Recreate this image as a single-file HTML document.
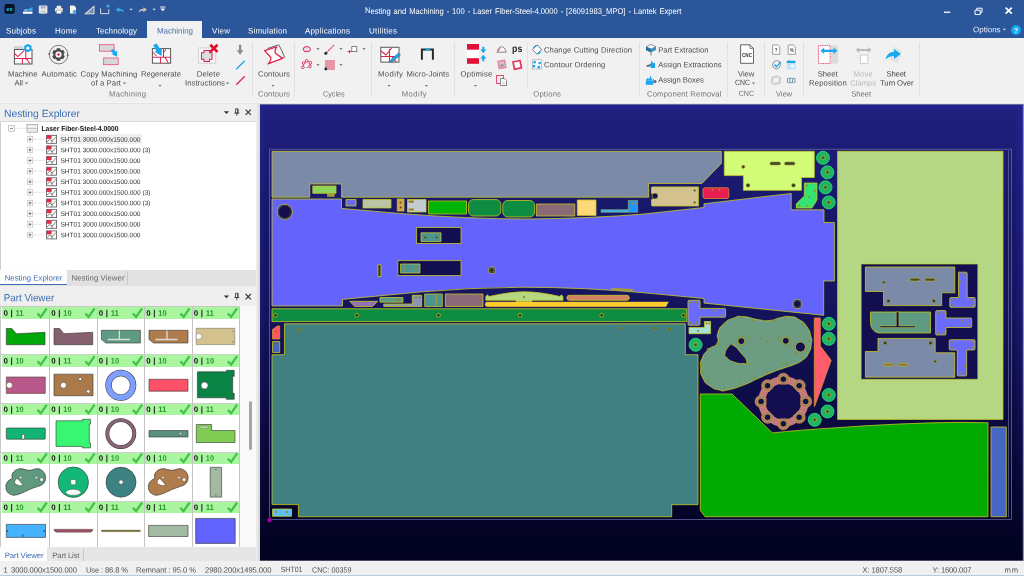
<!DOCTYPE html>
<html lang="en"><head><meta charset="utf-8"><title>Nesting and Machining - Lantek Expert</title>
<style>
html,body{margin:0;padding:0;}
body{width:1024px;height:576px;overflow:hidden;position:relative;background:#f0f0f0;font-family:"Liberation Sans",sans-serif;}
.t{position:absolute;left:0;top:0;white-space:pre;display:block;transform-origin:0 0;}
#root{position:absolute;left:0;top:0;width:1024px;height:576px;will-change:transform;}
.b{position:absolute;}
svg{position:absolute;overflow:visible;}
</style></head>
<body>
<div id="root">
<div class="b" style="left:0px;top:0px;width:1024px;height:38px;background:#2b579a;"></div>
<div class="b" style="left:147px;top:21px;width:55px;height:17px;background:#f1f1f1;"></div>
<span class="t" style="transform:translate(365.00px,5.50px) rotate(0.03deg) scaleX(0.913);font-size:8.3px;line-height:10px;color:#fff;letter-spacing:0.000px;word-spacing:0.9px;">Nesting and Machining - 100 - Laser Fiber-Steel-4.0000 - [26091983_MPO] - Lantek Expert</span>
<span class="t" style="transform:translate(6.00px,26.60px) rotate(0.03deg);font-size:8.0px;line-height:9px;color:#fff;letter-spacing:0.181px;">Subjobs</span>
<span class="t" style="transform:translate(55.00px,26.60px) rotate(0.03deg);font-size:8.0px;line-height:9px;color:#fff;letter-spacing:0.220px;">Home</span>
<span class="t" style="transform:translate(96.00px,26.60px) rotate(0.03deg);font-size:8.0px;line-height:9px;color:#fff;letter-spacing:0.058px;">Technology</span>
<span class="t" style="transform:translate(212.00px,26.60px) rotate(0.03deg);font-size:8.0px;line-height:9px;color:#fff;letter-spacing:0.268px;">View</span>
<span class="t" style="transform:translate(248.00px,26.60px) rotate(0.03deg);font-size:8.0px;line-height:9px;color:#fff;letter-spacing:0.183px;">Simulation</span>
<span class="t" style="transform:translate(305.00px,26.60px) rotate(0.03deg);font-size:8.0px;line-height:9px;color:#fff;letter-spacing:0.169px;">Applications</span>
<span class="t" style="transform:translate(369.00px,26.60px) rotate(0.03deg);font-size:8.0px;line-height:9px;color:#fff;letter-spacing:0.277px;">Utilities</span>
<span class="t" style="transform:translate(157.00px,26.60px) rotate(0.03deg);font-size:8.0px;line-height:9px;color:#4a6ea8;letter-spacing:-0.058px;">Machining</span>
<span class="t" style="transform:translate(973.00px,25.30px) rotate(0.03deg);font-size:8.0px;line-height:9px;color:#e8eef8;letter-spacing:0.005px;">Options</span>
<svg style="left:0;top:0" width="1024" height="38" viewBox="0 0 1024 38">
<rect x="4.5" y="4" width="10.2" height="9.8" rx="2" fill="#07131f"/>
<text x="9.6" y="10.800" font-size="6" font-weight="bold" fill="#1cc0f4" text-anchor="middle" font-family="Liberation Sans, sans-serif">ex</text>
<path d="M23 13.8h9.5v-2.2h-9.5z" fill="#fff"/><path d="M24 10.8l3-1.2 5.5-2.6v3.8z" fill="#39a9e8"/><path d="M23.5 11l2.5-2 1 1z" fill="#fff"/>
<rect x="38.8" y="5.6" width="8.6" height="8" rx="0.8" fill="#e9e6df"/><rect x="40.6" y="5.6" width="5" height="3" fill="#9fb4d3"/><rect x="40.8" y="10.4" width="4.6" height="3.2" fill="#c8cfdd"/>
<rect x="56.6" y="5.8" width="4.6" height="2.6" fill="#f2efe8"/><rect x="55" y="8" width="7.8" height="3.8" rx="0.8" fill="#e6e2da"/><rect x="56.6" y="10.6" width="4.6" height="3" fill="#fff" stroke="#8a93a8" stroke-width="0.4"/>
<path d="M70 5.5h4l2 2v6h-6z" fill="#f4f2ee"/><circle cx="74.6" cy="11.8" r="1.8" fill="#39a9e8"/>
<path d="M85.5 13.8h8.4v-7.4z" fill="none" stroke="#e9e6df" stroke-width="1.1"/><path d="M88.6 12.4h3.6v-3z" fill="none" stroke="#e9e6df" stroke-width="0.6"/>
<path d="M100.6 8.4v5.2h8.2v-4.4" fill="none" stroke="#e9e6df" stroke-width="0.9"/><circle cx="108" cy="6" r="1.6" fill="#39a9e8"/><path d="M101 13.6h8" stroke="#bcd" stroke-width="0.5"/>
<path d="M115.6 9.6l3.6-2.4v1.6c2.6 0 4.4 1.2 4.8 3.8c-1.2-1.4-2.6-1.8-4.8-1.8v1.400z" fill="#39a9e8"/>
<path d="M129.400 8.800h3.400l-1.700 1.800z" fill="#d5dded"/>
<path d="M147 9.600l-3.600-2.400v1.600c-2.600 0-4.400 1.200-4.800 3.800c1.200-1.400 2.600-1.800 4.800-1.800v1.400z" fill="#c9c3b4"/>
<path d="M152.400 8.800h3.400l-1.700 1.800z" fill="#d5dded"/>
<path d="M160.200 6.600h5.200v1h-5.200z M160.200 8.400h5.200l-2.600 2.800z" fill="#f2f4f8"/>
<path d="M944 11.600h6.200v1.300h-6.200z" fill="#fff"/>
<path d="M975 10.200h5.200v4.300h-5.200z M976.800 10v-1.800h5.200v4.200h-1.600" fill="none" stroke="#fff" stroke-width="1"/>
<path d="M1005.600 7.600l6.200 6 M1011.800 7.600l-6.200 6" stroke="#fff" stroke-width="1.7"/>
<path d="M1002.800 28.800h3.200l-1.600 1.700z" fill="#d5dded"/>
<circle cx="1016" cy="30" r="5" fill="#11a8f0"/>
<text x="1016" y="32.800" font-size="7.500" font-weight="bold" fill="#fff" text-anchor="middle" font-family="Liberation Sans, sans-serif">?</text>
</svg>
<div class="b" style="left:0px;top:38px;width:1024px;height:64.5px;background:#f1f1f1;"></div>
<div class="b" style="left:0px;top:102.3px;width:1024px;height:1.3px;background:#f7f7f7;"></div>
<div class="b" style="left:0px;top:103.4px;width:1024px;height:0.8px;background:#e2e2e2;"></div>
<div class="b" style="left:251.7px;top:42px;width:1px;height:54.5px;background:#e0e0e0;"></div>
<div class="b" style="left:294px;top:42px;width:1px;height:54.5px;background:#e0e0e0;"></div>
<div class="b" style="left:370.7px;top:42px;width:1px;height:54.5px;background:#e0e0e0;"></div>
<div class="b" style="left:453.6px;top:42px;width:1px;height:54.5px;background:#e0e0e0;"></div>
<div class="b" style="left:638.5px;top:42px;width:1px;height:54.5px;background:#e0e0e0;"></div>
<div class="b" style="left:726.5px;top:42px;width:1px;height:54.5px;background:#e0e0e0;"></div>
<div class="b" style="left:763.5px;top:42px;width:1px;height:54.5px;background:#e0e0e0;"></div>
<div class="b" style="left:802.5px;top:42px;width:1px;height:54.5px;background:#e0e0e0;"></div>
<div class="b" style="left:918.5px;top:42px;width:1px;height:54.5px;background:#e0e0e0;"></div>
<div class="b" style="left:527.3px;top:42px;width:1px;height:45px;background:#e2e2e2;"></div>
<span class="t" style="transform:translate(8.00px,69.60px) rotate(0.03deg);font-size:7.7px;line-height:9px;color:#4c4c4c;letter-spacing:0.066px;">Machine</span>
<span class="t" style="transform:translate(14.50px,78.40px) rotate(0.03deg);font-size:7.7px;line-height:9px;color:#4c4c4c;letter-spacing:-0.029px;">All</span>
<span class="t" style="transform:translate(41.50px,69.60px) rotate(0.03deg);font-size:7.7px;line-height:9px;color:#4c4c4c;letter-spacing:0.158px;">Automatic</span>
<span class="t" style="transform:translate(80.50px,69.60px) rotate(0.03deg);font-size:7.7px;line-height:9px;color:#4c4c4c;letter-spacing:0.137px;">Copy Machining</span>
<span class="t" style="transform:translate(91.00px,78.40px) rotate(0.03deg);font-size:7.7px;line-height:9px;color:#4c4c4c;letter-spacing:0.112px;">of a Part</span>
<span class="t" style="transform:translate(141.00px,69.60px) rotate(0.03deg);font-size:7.7px;line-height:9px;color:#4c4c4c;letter-spacing:-0.027px;">Regenerate</span>
<span class="t" style="transform:translate(196.70px,69.60px) rotate(0.03deg);font-size:7.7px;line-height:9px;color:#4c4c4c;letter-spacing:0.208px;">Delete</span>
<span class="t" style="transform:translate(185.00px,78.40px) rotate(0.03deg);font-size:7.7px;line-height:9px;color:#4c4c4c;letter-spacing:0.057px;">Instructions</span>
<span class="t" style="transform:translate(109.00px,89.40px) rotate(0.03deg);font-size:7.7px;line-height:9px;color:#747474;letter-spacing:0.238px;">Machining</span>
<span class="t" style="transform:translate(258.00px,69.60px) rotate(0.03deg);font-size:7.7px;line-height:9px;color:#4c4c4c;letter-spacing:0.108px;">Contours</span>
<span class="t" style="transform:translate(258.00px,89.40px) rotate(0.03deg);font-size:7.7px;line-height:9px;color:#747474;letter-spacing:0.108px;">Contours</span>
<span class="t" style="transform:translate(323.00px,89.40px) rotate(0.03deg) scaleX(0.939);font-size:7.7px;line-height:9px;color:#747474;letter-spacing:0.000px;">Cycles</span>
<span class="t" style="transform:translate(378.00px,69.60px) rotate(0.03deg);font-size:7.7px;line-height:9px;color:#4c4c4c;letter-spacing:0.464px;">Modify</span>
<span class="t" style="transform:translate(406.50px,69.60px) rotate(0.03deg);font-size:7.7px;line-height:9px;color:#4c4c4c;letter-spacing:0.109px;">Micro-Joints</span>
<span class="t" style="transform:translate(401.70px,89.40px) rotate(0.03deg);font-size:7.7px;line-height:9px;color:#747474;letter-spacing:0.464px;">Modify</span>
<span class="t" style="transform:translate(460.50px,69.60px) rotate(0.03deg);font-size:7.7px;line-height:9px;color:#4c4c4c;letter-spacing:0.217px;">Optimise</span>
<span class="t" style="transform:translate(512.00px,42.80px) rotate(0.03deg) scaleX(0.865);font-size:10.2px;line-height:11px;color:#2a2a2a;letter-spacing:0.000px;font-weight:bold;">ps</span>
<span class="t" style="transform:translate(543.90px,45.50px) rotate(0.03deg);font-size:7.7px;line-height:9px;color:#4c4c4c;letter-spacing:0.099px;">Change Cutting Direction</span>
<span class="t" style="transform:translate(543.90px,60.20px) rotate(0.03deg);font-size:7.7px;line-height:9px;color:#4c4c4c;letter-spacing:0.140px;">Contour Ordering</span>
<span class="t" style="transform:translate(533.20px,89.40px) rotate(0.03deg);font-size:7.7px;line-height:9px;color:#747474;letter-spacing:0.211px;">Options</span>
<span class="t" style="transform:translate(658.20px,45.50px) rotate(0.03deg);font-size:7.7px;line-height:9px;color:#4c4c4c;letter-spacing:-0.014px;">Part Extraction</span>
<span class="t" style="transform:translate(658.20px,60.20px) rotate(0.03deg);font-size:7.7px;line-height:9px;color:#4c4c4c;letter-spacing:0.004px;">Assign Extractions</span>
<span class="t" style="transform:translate(658.20px,75.50px) rotate(0.03deg);font-size:7.7px;line-height:9px;color:#4c4c4c;letter-spacing:-0.087px;">Assign Boxes</span>
<span class="t" style="transform:translate(647.00px,89.40px) rotate(0.03deg);font-size:7.7px;line-height:9px;color:#747474;letter-spacing:0.142px;">Component Removal</span>
<span class="t" style="transform:translate(738.00px,69.60px) rotate(0.03deg);font-size:7.7px;line-height:9px;color:#4c4c4c;letter-spacing:-0.050px;">View</span>
<span class="t" style="transform:translate(735.00px,78.40px) rotate(0.03deg) scaleX(0.899);font-size:7.7px;line-height:9px;color:#4c4c4c;letter-spacing:0.000px;">CNC</span>
<span class="t" style="transform:translate(738.70px,89.40px) rotate(0.03deg) scaleX(0.917);font-size:7.7px;line-height:9px;color:#747474;letter-spacing:0.000px;">CNC</span>
<span class="t" style="transform:translate(775.90px,89.40px) rotate(0.03deg);font-size:7.7px;line-height:9px;color:#747474;letter-spacing:-0.084px;">View</span>
<span class="t" style="transform:translate(817.70px,69.60px) rotate(0.03deg);font-size:7.7px;line-height:9px;color:#4c4c4c;letter-spacing:-0.031px;">Sheet</span>
<span class="t" style="transform:translate(809.00px,78.40px) rotate(0.03deg);font-size:7.7px;line-height:9px;color:#4c4c4c;letter-spacing:0.168px;">Reposition</span>
<span class="t" style="transform:translate(853.50px,69.60px) rotate(0.03deg);font-size:7.7px;line-height:9px;color:#b9b9b9;letter-spacing:0.123px;">Move</span>
<span class="t" style="transform:translate(850.20px,78.40px) rotate(0.03deg);font-size:7.7px;line-height:9px;color:#b9b9b9;letter-spacing:-0.020px;">Clamps</span>
<span class="t" style="transform:translate(886.50px,69.60px) rotate(0.03deg);font-size:7.7px;line-height:9px;color:#444;letter-spacing:-0.156px;">Sheet</span>
<span class="t" style="transform:translate(880.00px,78.40px) rotate(0.03deg);font-size:7.7px;line-height:9px;color:#444;letter-spacing:-0.109px;">Turn Over</span>
<span class="t" style="transform:translate(851.20px,89.40px) rotate(0.03deg);font-size:7.7px;line-height:9px;color:#747474;letter-spacing:-0.031px;">Sheet</span>
<svg style="left:0;top:38px" width="1024" height="66" viewBox="0 38 1024 66">
<path d="M24.9 82.6h3.200l-1.600 1.900z" fill="#777"/>
<path d="M122.9 82.6h3.200l-1.600 1.900z" fill="#777"/>
<path d="M158.4 84.9h3.200l-1.600 1.900z" fill="#777"/>
<path d="M226.0 82.6h3.200l-1.600 1.900z" fill="#777"/>
<path d="M271.4 84.9h3.200l-1.600 1.900z" fill="#777"/>
<path d="M387.4 84.9h3.200l-1.600 1.900z" fill="#777"/>
<path d="M424.8 84.9h3.200l-1.600 1.900z" fill="#777"/>
<path d="M473.9 84.9h3.200l-1.600 1.900z" fill="#777"/>
<path d="M751.9 82.6h3.200l-1.600 1.900z" fill="#777"/>
<path d="M316.4 48.1h3.200l-1.600 1.900z" fill="#777"/>
<path d="M339.4 48.1h3.200l-1.600 1.900z" fill="#777"/>
<path d="M362.4 48.1h3.200l-1.600 1.900z" fill="#777"/>
<path d="M316.4 64.1h3.200l-1.600 1.900z" fill="#777"/>
<path d="M339.4 64.1h3.200l-1.600 1.900z" fill="#777"/>
<rect x="14" y="46.200" width="9.200" height="3.200" fill="#d0d0d0"/>
<rect x="14.400" y="49.500" width="17.600" height="14.500" fill="#fff" stroke="#555" stroke-width="1"/>
<path d="M14.500 53.500l3.300 3.100 6.600-6.200 M14.500 58.400h17.600 M25.800 50v9.500 M26.100 58.400l3.800 5.300 M22.400 58.400v5.400" stroke="#e0234e" stroke-width="1.050" fill="none"/>
<circle cx="27.900" cy="48.100" r="2.700" fill="#fff" stroke="#1aa7ee" stroke-width="2"/>
<path d="M27.900 44.100v8 M24.450 46.100l6.900 4 M31.350 46.100l-6.900 4" stroke="#1aa7ee" stroke-width="1.700"/><circle cx="27.900" cy="48.100" r="1.650" fill="#fff"/>
<circle cx="58.600" cy="54.600" r="9.300" fill="none" stroke="#555" stroke-width="0.750"/>
<path d="M48.200 53.200l1 2 1.400-1.800z M68.800 55.800l-1-2-1.400 1.800z" fill="#4a4a4a"/>
<path d="M61.10 56.00L63.96 57.65M58.50 57.50L58.50 60.80M55.90 56.00L53.04 57.65M55.90 53.00L53.04 51.35M58.50 51.50L58.50 48.20M61.10 53.00L63.96 51.35" stroke="#4a4a4a" stroke-width="3.600"/>
<circle cx="58.500" cy="54.500" r="5.200" fill="#4a4a4a"/><circle cx="58.500" cy="54.500" r="3.100" fill="#fff"/><circle cx="58.500" cy="54.500" r="1.300" fill="#e0234e"/>
<rect x="99.500" y="44.600" width="14.600" height="6.600" fill="#d8d8d8" stroke="#ec6a8a" stroke-width="1"/>
<rect x="103.600" y="58" width="14.600" height="6.600" fill="#d8d8d8" stroke="#ec6a8a" stroke-width="1"/>
<path d="M110.500 50.500l3-1.500 2 2.500 1.800-0.800-0.500 6-5.300-2.700 1.600-0.800z" fill="#1aa7ee"/>
<rect x="152.400" y="48.600" width="18.200" height="14.600" fill="#fff" stroke="#555" stroke-width="1"/>
<path d="M152.500 52l4 4 M152.500 57.300h18 M163.500 49v8.300 M160.600 57.300v6 M165 57.300l3.300 5.800 M163.500 52.500l2.500-3" stroke="#e0234e" stroke-width="1.050" fill="none"/>
<path d="M153.200 45.200l3.400-1.700 3.300 5.300 2-1-0.300 8.200-7.300-4.300 2-1z" fill="#1aa7ee"/>
<rect x="198.500" y="47.900" width="17.200" height="15.400" fill="#f6f6f6" stroke="#9a9a9a" stroke-width="0.700" stroke-dasharray="0.800 0.800"/>
<path d="M204 50.500h5.500v2.300h2.500v6.400h-2.500v2.300h-5.500v-2.300h-2.500v-6.400h2.500z" fill="#dedede" stroke="#e0234e" stroke-width="1.050"/>
<path d="M210.300 44.700l7.200 7.200 M217.500 44.700l-7.200 7.200" stroke="#e00f2f" stroke-width="2.700"/>
<path d="M239 44.800h2.200v5.500h2.200l-3.300 4.500-3.300-4.500h2.200z" fill="#8a8a8a"/>
<path d="M236.200 69.300l8.600-8.500" stroke="#1aa7ee" stroke-width="1.300"/>
<path d="M236.200 84.800l8.600-8.500" stroke="#e0234e" stroke-width="1.300"/>
<path d="M267.500 48.500l11.300-3.700q3.500 6 5.800 12.700l-13.600 4.700" fill="#f4f4f4" stroke="#555" stroke-width="0.900"/>
<path d="M264.600 50.600l12-3.700q-2.200 4.300-1.200 6.300l7.200 5.200-14.600 5.500q3.400-3.500 2.800-6.600z" fill="#fff" stroke="#e0234e" stroke-width="1.300" stroke-linejoin="round"/>
<ellipse cx="306.800" cy="49.200" rx="3.700" ry="2.600" fill="#eedde0" stroke="#e0234e" stroke-width="1"/>
<path d="M326 53l8.500-8.300" stroke="#e0234e" stroke-width="1.100" stroke-dasharray="2.200 0.800"/><circle cx="325.800" cy="53.200" r="1.500" fill="#1c2b36"/>
<rect x="351.800" y="46.600" width="5" height="5" fill="#fff" stroke="#666" stroke-width="0.800"/><path d="M347.500 51.600h4.500 M349.500 50v3.300" stroke="#e0234e" stroke-width="0.900"/>
<path d="M302.800 67.300l0.900-4.300 3-2.200 3.700 2 -0.400 3.500" fill="none" stroke="#e0234e" stroke-width="0.800"/><path d="M304.500 67.500h5" stroke="#666" stroke-width="0.700" stroke-dasharray="0.800 0.600"/>
<circle cx="302.8" cy="67.3" r="1.300" fill="#fff" stroke="#e0234e" stroke-width="0.900"/>
<circle cx="303.7" cy="63" r="1.300" fill="#fff" stroke="#e0234e" stroke-width="0.900"/>
<circle cx="306.7" cy="60.8" r="1.300" fill="#fff" stroke="#e0234e" stroke-width="0.900"/>
<circle cx="310.4" cy="62.8" r="1.300" fill="#fff" stroke="#e0234e" stroke-width="0.900"/>
<circle cx="310" cy="66.3" r="1.300" fill="#fff" stroke="#e0234e" stroke-width="0.900"/>
<rect x="325.2" y="60.2" width="1.500" height="1.500" fill="#e0506e"/>
<rect x="325.2" y="62.2" width="1.500" height="1.500" fill="#e0506e"/>
<rect x="325.2" y="64.2" width="1.500" height="1.500" fill="#e0506e"/>
<rect x="325.2" y="66.2" width="1.500" height="1.500" fill="#e0506e"/>
<rect x="325.2" y="68.2" width="1.500" height="1.500" fill="#e0506e"/>
<rect x="327.2" y="60.2" width="1.500" height="1.500" fill="#e0506e"/>
<rect x="327.2" y="62.2" width="1.500" height="1.500" fill="#e0506e"/>
<rect x="327.2" y="64.2" width="1.500" height="1.500" fill="#e0506e"/>
<rect x="327.2" y="66.2" width="1.500" height="1.500" fill="#e0506e"/>
<rect x="327.2" y="68.2" width="1.500" height="1.500" fill="#e0506e"/>
<rect x="329.2" y="60.2" width="1.500" height="1.500" fill="#e0506e"/>
<rect x="329.2" y="62.2" width="1.500" height="1.500" fill="#e0506e"/>
<rect x="329.2" y="64.2" width="1.500" height="1.500" fill="#e0506e"/>
<rect x="329.2" y="66.2" width="1.500" height="1.500" fill="#e0506e"/>
<rect x="329.2" y="68.2" width="1.500" height="1.500" fill="#e0506e"/>
<rect x="331.2" y="60.2" width="1.500" height="1.500" fill="#e0506e"/>
<rect x="331.2" y="62.2" width="1.500" height="1.500" fill="#e0506e"/>
<rect x="331.2" y="64.2" width="1.500" height="1.500" fill="#e0506e"/>
<rect x="331.2" y="66.2" width="1.500" height="1.500" fill="#e0506e"/>
<rect x="331.2" y="68.2" width="1.500" height="1.500" fill="#e0506e"/>
<rect x="333.2" y="60.2" width="1.500" height="1.500" fill="#e0506e"/>
<rect x="333.2" y="62.2" width="1.500" height="1.500" fill="#e0506e"/>
<rect x="333.2" y="64.2" width="1.500" height="1.500" fill="#e0506e"/>
<rect x="333.2" y="66.2" width="1.500" height="1.500" fill="#e0506e"/>
<rect x="333.2" y="68.2" width="1.500" height="1.500" fill="#e0506e"/>
<circle cx="325.800" cy="69" r="1.400" fill="#1c2b36"/>
<rect x="380.800" y="47.300" width="18.200" height="14.800" fill="#fff" stroke="#666" stroke-width="1.100"/>
<path d="M381 51l5 4 6-7.500 M381 56.500h18 M389.500 49v13 M392 56.500l4 5.500" stroke="#e0234e" stroke-width="1.100" fill="none"/>
<path d="M390 62.500l1-3 7.500-6.500 2 2-7.500 6.500z" fill="#1aa7ee" stroke="#456" stroke-width="0.500"/>
<path d="M421.900 59.800v-10.400h11v10.400" fill="none" stroke="#2a2a2a" stroke-width="2"/><rect x="425.800" y="48.300" width="4.400" height="2.200" fill="#1aa7ee"/>
<rect x="467" y="44" width="12" height="19.800" fill="#fff"/><rect x="467" y="44" width="12" height="5.700" fill="#e01038"/><rect x="467" y="58.200" width="12" height="5.600" fill="#e01038"/>
<path d="M482.300 46.700h2v2.800h2l-3 3.800-3-3.800h2z M482.300 61.300h2v-2.800h2l-3-3.800-3 3.800h2z" fill="#1aa7ee"/>
<path d="M496.500 52.200h10 M497.500 51.600c0.500-3 2-4.800 4.200-4.800s3.700 1.800 4.200 4.800" fill="#f7f7f7" stroke="#666" stroke-width="0.800"/><path d="M497.500 51.200l3-2.500" stroke="#e0234e" stroke-width="0.800"/>
<path d="M498 61.500l6.500-1.200 1.300 7-6.600 1.300z" fill="#d4c4c8" stroke="#e58aa2" stroke-width="1.600"/><path d="M500.500 64.500h3v2h-3z" fill="#888"/>
<path d="M513 62l7-1.500 1.500 7.300-7 1.400z" fill="#fff" stroke="#e3365c" stroke-width="1.700"/>
<rect x="496.600" y="75.500" width="6.800" height="8" fill="#fbeef1" stroke="#e3365c" stroke-width="0.900"/><path d="M500.500 78.500h4l2 2v5h-6z" fill="#fff" stroke="#666" stroke-width="0.800"/><path d="M502 82h3 M502 83.500h3" stroke="#999" stroke-width="0.500"/>
<path d="M537 45l4.800 4.500-4.800 4.700-4.700-4.700z" fill="#fff" stroke="#666" stroke-width="0.900"/><path d="M533.500 48l2.500-2.500 M540.500 51.500l-2.500 2.500" stroke="#1aa7ee" stroke-width="1.700"/>
<rect x="532.500" y="59.800" width="9" height="9.200" fill="#fff" stroke="#999" stroke-width="0.600"/>
<circle cx="534.6" cy="62.2" r="1.350" fill="#1aa7ee"/>
<circle cx="539.6" cy="63" r="1.350" fill="#1aa7ee"/>
<circle cx="538.8" cy="67.2" r="1.350" fill="#1aa7ee"/>
<circle cx="534" cy="66.2" r="1.350" fill="#1aa7ee"/>
<path d="M646 46.800l5-2.300 5 2.300-5 2.200z" fill="#fff" stroke="#456" stroke-width="0.600"/><path d="M646 46.800l5 2.200v3.600l-5-2.400z" fill="#1f6f98"/><path d="M651 49l5-2.200v3.300l-5 2.500z" fill="#3a93c0"/><path d="M650.300 52.400h1.500l-0.400 3.300h-0.700z" fill="#888"/>
<path d="M646 65.500l8-2.500 1.500 1.500-8 2.500z" fill="#567"/><path d="M651.500 60.500l1.500 2.500h2v5h-4.500v-4z" fill="#1aa7ee"/>
<rect x="645.800" y="80.500" width="7.600" height="4.300" fill="#1aa7ee"/><path d="M645.800 80.500l1.500-2.500 2 1 1-3.500 2 4.500 1.500-1.500v2" fill="#1aa7ee"/><circle cx="655" cy="81.500" r="1.500" fill="#567"/>
<path d="M740.600 44.800h9.300l3.600 3.600v14.900h-12.900z" fill="#fff" stroke="#555" stroke-width="0.900"/><path d="M749.900 44.800v3.600h3.600" fill="none" stroke="#555" stroke-width="0.700"/>
<text x="747" y="56.800" font-size="4.600" font-weight="bold" fill="#333" text-anchor="middle" font-family="Liberation Sans, sans-serif">CNC</text>
<path d="M772.6 45h5l2.200 2v7.300h-7.200z" fill="#fff" stroke="#777" stroke-width="0.700"/><text x="776.2" y="52" font-size="4.500" font-weight="bold" fill="#444" text-anchor="middle" font-family="Liberation Sans, sans-serif">?</text>
<path d="M788.2 45h5l2.200 2v7.300h-7.200z" fill="#fff" stroke="#777" stroke-width="0.700"/><text x="791.8000000000001" y="52" font-size="4.500" font-weight="bold" fill="#444" text-anchor="middle" font-family="Liberation Sans, sans-serif">%</text>
<path d="M774 61.500l2.500-1 3 1 1 3-1 3-3 1.500-3-1.500-1-3z" fill="#f4f4f4" stroke="#777" stroke-width="0.800"/><path d="M774.500 64.500l2 2.200 4.300-4.800" fill="none" stroke="#1aa7ee" stroke-width="1.400"/>
<rect x="786.800" y="60.800" width="8.600" height="8.600" fill="#bfe3f8"/><rect x="786.800" y="60.800" width="8.600" height="2.200" fill="#1aa7ee"/><rect x="791" y="64.500" width="3" height="3" fill="#fff"/><path d="M789.200 60v2" stroke="#1aa7ee" stroke-width="1"/>
<path d="M772 77.500l6-1.500 2.500 2-0.500 5-6 1.500-2.500-2z" fill="#e6e6e6" stroke="#b5b5b5" stroke-width="0.900"/><circle cx="776" cy="80" r="1.300" fill="#fff"/>
<path d="M787.500 78.500v4 M790 78.500v4 M792.500 78.500v4 M795 78.500v4" stroke="#7a8a96" stroke-width="0.900"/><path d="M787.500 79c0.800-1.200 1.700-1.200 2.500 0c0.800-1.200 1.700-1.200 2.500 0c0.800-1.200 1.700-1.200 2.500 0 M787.500 82c0.800 1.200 1.700 1.200 2.500 0c0.800 1.200 1.700 1.200 2.500 0c0.800 1.200 1.700 1.200 2.500 0" fill="none" stroke="#4a8aa8" stroke-width="0.800"/>
<rect x="831" y="45.500" width="7" height="18" fill="#dcdcdc"/><rect x="818.500" y="45.500" width="11.600" height="18" fill="#fff" stroke="#e3365c" stroke-width="0.900" stroke-dasharray="1 0.700"/>
<path d="M820.400 50.800l3.800-3.300v2.200h9.400v-2.200l3.800 3.300-3.800 3.300v-2.200h-9.400v2.200z" fill="#1aa7ee"/>
<path d="M855.800 50l3.400-3v2h8.800v-2l3.400 3-3.400 3v-2h-8.800v2z" fill="#bbbbbb"/><rect x="860.300" y="55" width="7.500" height="8.500" fill="#fff" stroke="#d0d0d0" stroke-width="1.100"/>
<path d="M893 46.500l9 4-4 13-9-4z" fill="#e4e4e4"/><path d="M885.600 59.500c0.800-5 4-7.500 8.400-7.500v-3l7 5-7 5v-3c-3.500 0-6 1-8.400 3.500z" fill="#1aa7ee"/>
</svg>
<div class="b" style="left:0px;top:104.3px;width:260px;height:457px;background:#efefef;"></div>
<span class="t" style="transform:translate(4.00px,108.00px) rotate(0.03deg);font-size:10.4px;line-height:11px;color:#3f6fb5;letter-spacing:-0.059px;">Nesting Explorer</span>
<div class="b" style="left:0px;top:121.2px;width:256px;height:148.6px;background:#fff;border-left:1px solid #cfcfcf;border-top:1px solid #d6d6d6;box-sizing:border-box;"></div>
<svg style="left:0;top:0" width="260" height="576" viewBox="0 0 260 576"><path d="M223.800 111.19999999999999h5.300l-2.650 2.700z" fill="#333"/><path d="M235.500 108.89999999999999h2.600v4.200h-2.600z M234.300 113.1h5 M236.800 113.1v2.700" fill="none" stroke="#444" stroke-width="0.900"/><path d="M237.600 108.89999999999999v4.200" stroke="#444" stroke-width="0.900"/><path d="M245.600 109.6l5.300 5.300 M250.900 109.6l-5.300 5.300" stroke="#3a3a3a" stroke-width="1.200"/><path d="M223.800 295.6h5.300l-2.650 2.700z" fill="#333"/><path d="M235.500 293.3h2.600v4.200h-2.600z M234.300 297.5h5 M236.800 297.5v2.700" fill="none" stroke="#444" stroke-width="0.900"/><path d="M237.600 293.3v4.200" stroke="#444" stroke-width="0.900"/><path d="M245.600 294l5.300 5.300 M250.900 294l-5.300 5.300" stroke="#3a3a3a" stroke-width="1.200"/></svg>
<svg style="left:0;top:121px" width="256" height="149" viewBox="0 121 256 149">
<path d="M14.500 128.400h12 M30 133v101.500" stroke="#bbb" stroke-width="0.600" stroke-dasharray="0.600 0.600"/>
<rect x="8.700" y="125.600" width="5.600" height="5.600" fill="#fff" stroke="#a8b0bc" stroke-width="0.700"/><path d="M10 128.400h3" stroke="#556" stroke-width="0.700"/>
<rect x="27" y="124.600" width="10.400" height="7.600" fill="#eee" stroke="#999" stroke-width="0.700"/><path d="M27 128.500h10.400" stroke="#aaa" stroke-width="0.600"/>
<path d="M33 139.3h12" stroke="#bbb" stroke-width="0.600" stroke-dasharray="0.600 0.600"/>
<rect x="27.300" y="136.6" width="5.400" height="5.400" fill="#fff" stroke="#b4bcc8" stroke-width="0.600"/><path d="M28.500 139.3h3 M30 137.8v3" stroke="#446" stroke-width="0.700"/>
<rect x="46.600" y="135.3" width="10" height="8" fill="#fff" stroke="#555" stroke-width="0.800"/><path d="M46.600 135.3h5v3.500h-5z" fill="#e02848"/><path d="M47 141.8l3-2.500 2 2 4-4.500 M52 139.8v3.500" stroke="#555" stroke-width="0.700" fill="none"/>
<path d="M33 149.9h12" stroke="#bbb" stroke-width="0.600" stroke-dasharray="0.600 0.600"/>
<rect x="27.300" y="147.2" width="5.400" height="5.400" fill="#fff" stroke="#b4bcc8" stroke-width="0.600"/><path d="M28.500 149.9h3 M30 148.4v3" stroke="#446" stroke-width="0.700"/>
<rect x="46.600" y="145.9" width="10" height="8" fill="#fff" stroke="#555" stroke-width="0.800"/><path d="M46.600 145.9h5v3.500h-5z" fill="#e02848"/><path d="M47 152.4l3-2.500 2 2 4-4.500 M52 150.4v3.500" stroke="#555" stroke-width="0.700" fill="none"/>
<path d="M33 160.5h12" stroke="#bbb" stroke-width="0.600" stroke-dasharray="0.600 0.600"/>
<rect x="27.300" y="157.8" width="5.400" height="5.400" fill="#fff" stroke="#b4bcc8" stroke-width="0.600"/><path d="M28.500 160.5h3 M30 159.0v3" stroke="#446" stroke-width="0.700"/>
<rect x="46.600" y="156.5" width="10" height="8" fill="#fff" stroke="#555" stroke-width="0.800"/><path d="M46.600 156.5h5v3.500h-5z" fill="#e02848"/><path d="M47 163.0l3-2.500 2 2 4-4.500 M52 161.0v3.500" stroke="#555" stroke-width="0.700" fill="none"/>
<path d="M33 171.2h12" stroke="#bbb" stroke-width="0.600" stroke-dasharray="0.600 0.600"/>
<rect x="27.300" y="168.5" width="5.400" height="5.400" fill="#fff" stroke="#b4bcc8" stroke-width="0.600"/><path d="M28.500 171.2h3 M30 169.7v3" stroke="#446" stroke-width="0.700"/>
<rect x="46.600" y="167.2" width="10" height="8" fill="#fff" stroke="#555" stroke-width="0.800"/><path d="M46.600 167.2h5v3.500h-5z" fill="#e02848"/><path d="M47 173.7l3-2.500 2 2 4-4.500 M52 171.7v3.500" stroke="#555" stroke-width="0.700" fill="none"/>
<path d="M33 181.8h12" stroke="#bbb" stroke-width="0.600" stroke-dasharray="0.600 0.600"/>
<rect x="27.300" y="179.1" width="5.400" height="5.400" fill="#fff" stroke="#b4bcc8" stroke-width="0.600"/><path d="M28.500 181.8h3 M30 180.3v3" stroke="#446" stroke-width="0.700"/>
<rect x="46.600" y="177.8" width="10" height="8" fill="#fff" stroke="#555" stroke-width="0.800"/><path d="M46.600 177.8h5v3.500h-5z" fill="#e02848"/><path d="M47 184.3l3-2.500 2 2 4-4.500 M52 182.3v3.500" stroke="#555" stroke-width="0.700" fill="none"/>
<path d="M33 192.4h12" stroke="#bbb" stroke-width="0.600" stroke-dasharray="0.600 0.600"/>
<rect x="27.300" y="189.7" width="5.400" height="5.400" fill="#fff" stroke="#b4bcc8" stroke-width="0.600"/><path d="M28.500 192.4h3 M30 190.9v3" stroke="#446" stroke-width="0.700"/>
<rect x="46.600" y="188.4" width="10" height="8" fill="#fff" stroke="#555" stroke-width="0.800"/><path d="M46.600 188.4h5v3.500h-5z" fill="#e02848"/><path d="M47 194.9l3-2.500 2 2 4-4.500 M52 192.9v3.500" stroke="#555" stroke-width="0.700" fill="none"/>
<path d="M33 203.0h12" stroke="#bbb" stroke-width="0.600" stroke-dasharray="0.600 0.600"/>
<rect x="27.300" y="200.3" width="5.400" height="5.400" fill="#fff" stroke="#b4bcc8" stroke-width="0.600"/><path d="M28.500 203.0h3 M30 201.5v3" stroke="#446" stroke-width="0.700"/>
<rect x="46.600" y="199.0" width="10" height="8" fill="#fff" stroke="#555" stroke-width="0.800"/><path d="M46.600 199.0h5v3.500h-5z" fill="#e02848"/><path d="M47 205.5l3-2.500 2 2 4-4.500 M52 203.5v3.500" stroke="#555" stroke-width="0.700" fill="none"/>
<path d="M33 213.6h12" stroke="#bbb" stroke-width="0.600" stroke-dasharray="0.600 0.600"/>
<rect x="27.300" y="210.9" width="5.400" height="5.400" fill="#fff" stroke="#b4bcc8" stroke-width="0.600"/><path d="M28.500 213.6h3 M30 212.1v3" stroke="#446" stroke-width="0.700"/>
<rect x="46.600" y="209.6" width="10" height="8" fill="#fff" stroke="#555" stroke-width="0.800"/><path d="M46.600 209.6h5v3.500h-5z" fill="#e02848"/><path d="M47 216.1l3-2.500 2 2 4-4.500 M52 214.1v3.500" stroke="#555" stroke-width="0.700" fill="none"/>
<path d="M33 224.3h12" stroke="#bbb" stroke-width="0.600" stroke-dasharray="0.600 0.600"/>
<rect x="27.300" y="221.6" width="5.400" height="5.400" fill="#fff" stroke="#b4bcc8" stroke-width="0.600"/><path d="M28.500 224.3h3 M30 222.8v3" stroke="#446" stroke-width="0.700"/>
<rect x="46.600" y="220.3" width="10" height="8" fill="#fff" stroke="#555" stroke-width="0.800"/><path d="M46.600 220.3h5v3.500h-5z" fill="#e02848"/><path d="M47 226.8l3-2.500 2 2 4-4.500 M52 224.8v3.500" stroke="#555" stroke-width="0.700" fill="none"/>
<path d="M33 234.9h12" stroke="#bbb" stroke-width="0.600" stroke-dasharray="0.600 0.600"/>
<rect x="27.300" y="232.2" width="5.400" height="5.400" fill="#fff" stroke="#b4bcc8" stroke-width="0.600"/><path d="M28.500 234.9h3 M30 233.4v3" stroke="#446" stroke-width="0.700"/>
<rect x="46.600" y="230.9" width="10" height="8" fill="#fff" stroke="#555" stroke-width="0.800"/><path d="M46.600 230.9h5v3.500h-5z" fill="#e02848"/><path d="M47 237.4l3-2.500 2 2 4-4.500 M52 235.4v3.500" stroke="#555" stroke-width="0.700" fill="none"/>
</svg>
<span class="t" style="transform:translate(41.50px,123.80px) rotate(0.03deg) scaleX(0.917);font-size:7.3px;line-height:9px;color:#111;letter-spacing:0.000px;font-weight:bold;">Laser Fiber-Steel-4.0000</span>
<div class="b" style="left:58.5px;top:134.2px;width:83.5px;height:10.2px;background:#f0f0f0;"></div>
<span class="t" style="transform:translate(60.40px,135.60px) rotate(0.03deg);font-size:6.6px;line-height:7px;color:#333;letter-spacing:-0.024px;">SHT01 3000.000x1500.000</span>
<span class="t" style="transform:translate(60.40px,146.22px) rotate(0.03deg);font-size:6.6px;line-height:7px;color:#333;letter-spacing:-0.017px;">SHT01 3000.000x1500.000 (3)</span>
<span class="t" style="transform:translate(60.40px,156.84px) rotate(0.03deg);font-size:6.6px;line-height:7px;color:#333;letter-spacing:-0.024px;">SHT01 3000.000x1500.000</span>
<span class="t" style="transform:translate(60.40px,167.46px) rotate(0.03deg);font-size:6.6px;line-height:7px;color:#333;letter-spacing:-0.024px;">SHT01 3000.000x1500.000</span>
<span class="t" style="transform:translate(60.40px,178.08px) rotate(0.03deg);font-size:6.6px;line-height:7px;color:#333;letter-spacing:-0.024px;">SHT01 3000.000x1500.000</span>
<span class="t" style="transform:translate(60.40px,188.70px) rotate(0.03deg);font-size:6.6px;line-height:7px;color:#333;letter-spacing:-0.017px;">SHT01 3000.000x1500.000 (3)</span>
<span class="t" style="transform:translate(60.40px,199.32px) rotate(0.03deg);font-size:6.6px;line-height:7px;color:#333;letter-spacing:-0.017px;">SHT01 3000.000x1500.000 (3)</span>
<span class="t" style="transform:translate(60.40px,209.94px) rotate(0.03deg);font-size:6.6px;line-height:7px;color:#333;letter-spacing:-0.024px;">SHT01 3000.000x1500.000</span>
<span class="t" style="transform:translate(60.40px,220.56px) rotate(0.03deg);font-size:6.6px;line-height:7px;color:#333;letter-spacing:-0.024px;">SHT01 3000.000x1500.000</span>
<span class="t" style="transform:translate(60.40px,231.18px) rotate(0.03deg);font-size:6.6px;line-height:7px;color:#333;letter-spacing:-0.024px;">SHT01 3000.000x1500.000</span>
<div class="b" style="left:0px;top:269.8px;width:256px;height:16.6px;background:#e1e1e1;"></div>
<div class="b" style="left:0px;top:269.8px;width:66.6px;height:14.6px;background:#fdfdfd;"></div>
<div class="b" style="left:0px;top:284.2px;width:66.6px;height:1.3px;background:#3f6fb5;"></div>
<div class="b" style="left:126.8px;top:271px;width:1px;height:13.5px;background:#c8c8c8;"></div>
<span class="t" style="transform:translate(4.70px,273.40px) rotate(0.03deg);font-size:7.8px;line-height:9px;color:#3f6fb5;letter-spacing:0.009px;">Nesting Explorer</span>
<span class="t" style="transform:translate(71.50px,273.40px) rotate(0.03deg);font-size:7.8px;line-height:9px;color:#666;letter-spacing:0.053px;">Nesting Viewer</span>
<div class="b" style="left:239.8px;top:306.2px;width:16.4px;height:241px;background:#f9f9f9;"></div>
<span class="t" style="transform:translate(3.70px,292.30px) rotate(0.03deg) scaleX(0.943);font-size:10.4px;line-height:11px;color:#3f6fb5;letter-spacing:0.000px;">Part Viewer</span>
<div class="b" style="left:0px;top:306.2px;width:239.8px;height:241px;background:#fff;border-left:1px solid #c8c8c8;border-top:1px solid #c8c8c8;box-sizing:border-box;"></div>
<div class="b" style="left:2px;top:307.2px;width:237.4px;height:11.9px;background:#a9f5a0;"></div>
<div class="b" style="left:2px;top:355.0px;width:237.4px;height:11.9px;background:#a9f5a0;"></div>
<div class="b" style="left:2px;top:403.6px;width:237.4px;height:11.9px;background:#a9f5a0;"></div>
<div class="b" style="left:2px;top:452.3px;width:237.4px;height:11.9px;background:#a9f5a0;"></div>
<div class="b" style="left:2px;top:501.4px;width:237.4px;height:11.9px;background:#a9f5a0;"></div>
<div class="b" style="left:49.2px;top:306.5px;width:0.9px;height:240.5px;background:#c4c4c4;"></div>
<div class="b" style="left:96.7px;top:306.5px;width:0.9px;height:240.5px;background:#c4c4c4;"></div>
<div class="b" style="left:144.2px;top:306.5px;width:0.9px;height:240.5px;background:#c4c4c4;"></div>
<div class="b" style="left:191.7px;top:306.5px;width:0.9px;height:240.5px;background:#c4c4c4;"></div>
<div class="b" style="left:239.2px;top:306.5px;width:0.9px;height:240.5px;background:#c4c4c4;"></div>
<div class="b" style="left:1px;top:354.2px;width:238.5px;height:0.8px;background:#cfcfcf;"></div>
<div class="b" style="left:1px;top:402.8px;width:238.5px;height:0.8px;background:#cfcfcf;"></div>
<div class="b" style="left:1px;top:451.5px;width:238.5px;height:0.8px;background:#cfcfcf;"></div>
<div class="b" style="left:1px;top:500.6px;width:238.5px;height:0.8px;background:#cfcfcf;"></div>
<span class="t" style="transform:translate(3.50px,308.70px) rotate(0.03deg);font-size:7.9px;line-height:9px;color:#111;letter-spacing:0.000px;font-weight:bold;">0</span>
<span class="t" style="transform:translate(10.50px,308.50px) rotate(0.03deg);font-size:7.9px;line-height:9px;color:#222;letter-spacing:0.000px;font-weight:bold;">|</span>
<span class="t" style="transform:translate(15.50px,308.70px) rotate(0.03deg);font-size:7.9px;line-height:9px;color:#239a23;letter-spacing:-0.152px;font-weight:bold;">11</span>
<span class="t" style="transform:translate(51.30px,308.70px) rotate(0.03deg);font-size:7.9px;line-height:9px;color:#111;letter-spacing:0.000px;font-weight:bold;">0</span>
<span class="t" style="transform:translate(58.30px,308.50px) rotate(0.03deg);font-size:7.9px;line-height:9px;color:#222;letter-spacing:0.000px;font-weight:bold;">|</span>
<span class="t" style="transform:translate(63.30px,308.70px) rotate(0.03deg) scaleX(0.933);font-size:7.9px;line-height:9px;color:#239a23;letter-spacing:0.000px;font-weight:bold;">10</span>
<span class="t" style="transform:translate(98.80px,308.70px) rotate(0.03deg);font-size:7.9px;line-height:9px;color:#111;letter-spacing:0.000px;font-weight:bold;">0</span>
<span class="t" style="transform:translate(105.80px,308.50px) rotate(0.03deg);font-size:7.9px;line-height:9px;color:#222;letter-spacing:0.000px;font-weight:bold;">|</span>
<span class="t" style="transform:translate(110.80px,308.70px) rotate(0.03deg);font-size:7.9px;line-height:9px;color:#239a23;letter-spacing:-0.152px;font-weight:bold;">11</span>
<span class="t" style="transform:translate(146.30px,308.70px) rotate(0.03deg);font-size:7.9px;line-height:9px;color:#111;letter-spacing:0.000px;font-weight:bold;">0</span>
<span class="t" style="transform:translate(153.30px,308.50px) rotate(0.03deg);font-size:7.9px;line-height:9px;color:#222;letter-spacing:0.000px;font-weight:bold;">|</span>
<span class="t" style="transform:translate(158.30px,308.70px) rotate(0.03deg) scaleX(0.933);font-size:7.9px;line-height:9px;color:#239a23;letter-spacing:0.000px;font-weight:bold;">10</span>
<span class="t" style="transform:translate(193.80px,308.70px) rotate(0.03deg);font-size:7.9px;line-height:9px;color:#111;letter-spacing:0.000px;font-weight:bold;">0</span>
<span class="t" style="transform:translate(200.80px,308.50px) rotate(0.03deg);font-size:7.9px;line-height:9px;color:#222;letter-spacing:0.000px;font-weight:bold;">|</span>
<span class="t" style="transform:translate(205.80px,308.70px) rotate(0.03deg);font-size:7.9px;line-height:9px;color:#239a23;letter-spacing:-0.152px;font-weight:bold;">11</span>
<span class="t" style="transform:translate(3.50px,356.50px) rotate(0.03deg);font-size:7.9px;line-height:9px;color:#111;letter-spacing:0.000px;font-weight:bold;">0</span>
<span class="t" style="transform:translate(10.50px,356.30px) rotate(0.03deg);font-size:7.9px;line-height:9px;color:#222;letter-spacing:0.000px;font-weight:bold;">|</span>
<span class="t" style="transform:translate(15.50px,356.50px) rotate(0.03deg) scaleX(0.933);font-size:7.9px;line-height:9px;color:#239a23;letter-spacing:0.000px;font-weight:bold;">10</span>
<span class="t" style="transform:translate(51.30px,356.50px) rotate(0.03deg);font-size:7.9px;line-height:9px;color:#111;letter-spacing:0.000px;font-weight:bold;">0</span>
<span class="t" style="transform:translate(58.30px,356.30px) rotate(0.03deg);font-size:7.9px;line-height:9px;color:#222;letter-spacing:0.000px;font-weight:bold;">|</span>
<span class="t" style="transform:translate(63.30px,356.50px) rotate(0.03deg);font-size:7.9px;line-height:9px;color:#239a23;letter-spacing:-0.152px;font-weight:bold;">11</span>
<span class="t" style="transform:translate(98.80px,356.50px) rotate(0.03deg);font-size:7.9px;line-height:9px;color:#111;letter-spacing:0.000px;font-weight:bold;">0</span>
<span class="t" style="transform:translate(105.80px,356.30px) rotate(0.03deg);font-size:7.9px;line-height:9px;color:#222;letter-spacing:0.000px;font-weight:bold;">|</span>
<span class="t" style="transform:translate(110.80px,356.50px) rotate(0.03deg) scaleX(0.933);font-size:7.9px;line-height:9px;color:#239a23;letter-spacing:0.000px;font-weight:bold;">10</span>
<span class="t" style="transform:translate(146.30px,356.50px) rotate(0.03deg);font-size:7.9px;line-height:9px;color:#111;letter-spacing:0.000px;font-weight:bold;">0</span>
<span class="t" style="transform:translate(153.30px,356.30px) rotate(0.03deg);font-size:7.9px;line-height:9px;color:#222;letter-spacing:0.000px;font-weight:bold;">|</span>
<span class="t" style="transform:translate(158.30px,356.50px) rotate(0.03deg) scaleX(0.933);font-size:7.9px;line-height:9px;color:#239a23;letter-spacing:0.000px;font-weight:bold;">10</span>
<span class="t" style="transform:translate(193.80px,356.50px) rotate(0.03deg);font-size:7.9px;line-height:9px;color:#111;letter-spacing:0.000px;font-weight:bold;">0</span>
<span class="t" style="transform:translate(200.80px,356.30px) rotate(0.03deg);font-size:7.9px;line-height:9px;color:#222;letter-spacing:0.000px;font-weight:bold;">|</span>
<span class="t" style="transform:translate(205.80px,356.50px) rotate(0.03deg) scaleX(0.933);font-size:7.9px;line-height:9px;color:#239a23;letter-spacing:0.000px;font-weight:bold;">10</span>
<span class="t" style="transform:translate(3.50px,405.10px) rotate(0.03deg);font-size:7.9px;line-height:9px;color:#111;letter-spacing:0.000px;font-weight:bold;">0</span>
<span class="t" style="transform:translate(10.50px,404.90px) rotate(0.03deg);font-size:7.9px;line-height:9px;color:#222;letter-spacing:0.000px;font-weight:bold;">|</span>
<span class="t" style="transform:translate(15.50px,405.10px) rotate(0.03deg) scaleX(0.933);font-size:7.9px;line-height:9px;color:#239a23;letter-spacing:0.000px;font-weight:bold;">10</span>
<span class="t" style="transform:translate(51.30px,405.10px) rotate(0.03deg);font-size:7.9px;line-height:9px;color:#111;letter-spacing:0.000px;font-weight:bold;">0</span>
<span class="t" style="transform:translate(58.30px,404.90px) rotate(0.03deg);font-size:7.9px;line-height:9px;color:#222;letter-spacing:0.000px;font-weight:bold;">|</span>
<span class="t" style="transform:translate(63.30px,405.10px) rotate(0.03deg) scaleX(0.933);font-size:7.9px;line-height:9px;color:#239a23;letter-spacing:0.000px;font-weight:bold;">10</span>
<span class="t" style="transform:translate(98.80px,405.10px) rotate(0.03deg);font-size:7.9px;line-height:9px;color:#111;letter-spacing:0.000px;font-weight:bold;">0</span>
<span class="t" style="transform:translate(105.80px,404.90px) rotate(0.03deg);font-size:7.9px;line-height:9px;color:#222;letter-spacing:0.000px;font-weight:bold;">|</span>
<span class="t" style="transform:translate(110.80px,405.10px) rotate(0.03deg) scaleX(0.933);font-size:7.9px;line-height:9px;color:#239a23;letter-spacing:0.000px;font-weight:bold;">10</span>
<span class="t" style="transform:translate(146.30px,405.10px) rotate(0.03deg);font-size:7.9px;line-height:9px;color:#111;letter-spacing:0.000px;font-weight:bold;">0</span>
<span class="t" style="transform:translate(153.30px,404.90px) rotate(0.03deg);font-size:7.9px;line-height:9px;color:#222;letter-spacing:0.000px;font-weight:bold;">|</span>
<span class="t" style="transform:translate(158.30px,405.10px) rotate(0.03deg);font-size:7.9px;line-height:9px;color:#239a23;letter-spacing:-0.152px;font-weight:bold;">11</span>
<span class="t" style="transform:translate(193.80px,405.10px) rotate(0.03deg);font-size:7.9px;line-height:9px;color:#111;letter-spacing:0.000px;font-weight:bold;">0</span>
<span class="t" style="transform:translate(200.80px,404.90px) rotate(0.03deg);font-size:7.9px;line-height:9px;color:#222;letter-spacing:0.000px;font-weight:bold;">|</span>
<span class="t" style="transform:translate(205.80px,405.10px) rotate(0.03deg);font-size:7.9px;line-height:9px;color:#239a23;letter-spacing:-0.152px;font-weight:bold;">11</span>
<span class="t" style="transform:translate(3.50px,453.80px) rotate(0.03deg);font-size:7.9px;line-height:9px;color:#111;letter-spacing:0.000px;font-weight:bold;">0</span>
<span class="t" style="transform:translate(10.50px,453.60px) rotate(0.03deg);font-size:7.9px;line-height:9px;color:#222;letter-spacing:0.000px;font-weight:bold;">|</span>
<span class="t" style="transform:translate(15.50px,453.80px) rotate(0.03deg);font-size:7.9px;line-height:9px;color:#239a23;letter-spacing:-0.152px;font-weight:bold;">11</span>
<span class="t" style="transform:translate(51.30px,453.80px) rotate(0.03deg);font-size:7.9px;line-height:9px;color:#111;letter-spacing:0.000px;font-weight:bold;">0</span>
<span class="t" style="transform:translate(58.30px,453.60px) rotate(0.03deg);font-size:7.9px;line-height:9px;color:#222;letter-spacing:0.000px;font-weight:bold;">|</span>
<span class="t" style="transform:translate(63.30px,453.80px) rotate(0.03deg) scaleX(0.933);font-size:7.9px;line-height:9px;color:#239a23;letter-spacing:0.000px;font-weight:bold;">10</span>
<span class="t" style="transform:translate(98.80px,453.80px) rotate(0.03deg);font-size:7.9px;line-height:9px;color:#111;letter-spacing:0.000px;font-weight:bold;">0</span>
<span class="t" style="transform:translate(105.80px,453.60px) rotate(0.03deg);font-size:7.9px;line-height:9px;color:#222;letter-spacing:0.000px;font-weight:bold;">|</span>
<span class="t" style="transform:translate(110.80px,453.80px) rotate(0.03deg) scaleX(0.933);font-size:7.9px;line-height:9px;color:#239a23;letter-spacing:0.000px;font-weight:bold;">10</span>
<span class="t" style="transform:translate(146.30px,453.80px) rotate(0.03deg);font-size:7.9px;line-height:9px;color:#111;letter-spacing:0.000px;font-weight:bold;">0</span>
<span class="t" style="transform:translate(153.30px,453.60px) rotate(0.03deg);font-size:7.9px;line-height:9px;color:#222;letter-spacing:0.000px;font-weight:bold;">|</span>
<span class="t" style="transform:translate(158.30px,453.80px) rotate(0.03deg) scaleX(0.933);font-size:7.9px;line-height:9px;color:#239a23;letter-spacing:0.000px;font-weight:bold;">10</span>
<span class="t" style="transform:translate(193.80px,453.80px) rotate(0.03deg);font-size:7.9px;line-height:9px;color:#111;letter-spacing:0.000px;font-weight:bold;">0</span>
<span class="t" style="transform:translate(200.80px,453.60px) rotate(0.03deg);font-size:7.9px;line-height:9px;color:#222;letter-spacing:0.000px;font-weight:bold;">|</span>
<span class="t" style="transform:translate(205.80px,453.80px) rotate(0.03deg) scaleX(0.933);font-size:7.9px;line-height:9px;color:#239a23;letter-spacing:0.000px;font-weight:bold;">10</span>
<span class="t" style="transform:translate(3.50px,502.90px) rotate(0.03deg);font-size:7.9px;line-height:9px;color:#111;letter-spacing:0.000px;font-weight:bold;">0</span>
<span class="t" style="transform:translate(10.50px,502.70px) rotate(0.03deg);font-size:7.9px;line-height:9px;color:#222;letter-spacing:0.000px;font-weight:bold;">|</span>
<span class="t" style="transform:translate(15.50px,502.90px) rotate(0.03deg) scaleX(0.933);font-size:7.9px;line-height:9px;color:#239a23;letter-spacing:0.000px;font-weight:bold;">10</span>
<span class="t" style="transform:translate(51.30px,502.90px) rotate(0.03deg);font-size:7.9px;line-height:9px;color:#111;letter-spacing:0.000px;font-weight:bold;">0</span>
<span class="t" style="transform:translate(58.30px,502.70px) rotate(0.03deg);font-size:7.9px;line-height:9px;color:#222;letter-spacing:0.000px;font-weight:bold;">|</span>
<span class="t" style="transform:translate(63.30px,502.90px) rotate(0.03deg);font-size:7.9px;line-height:9px;color:#239a23;letter-spacing:-0.152px;font-weight:bold;">11</span>
<span class="t" style="transform:translate(98.80px,502.90px) rotate(0.03deg);font-size:7.9px;line-height:9px;color:#111;letter-spacing:0.000px;font-weight:bold;">0</span>
<span class="t" style="transform:translate(105.80px,502.70px) rotate(0.03deg);font-size:7.9px;line-height:9px;color:#222;letter-spacing:0.000px;font-weight:bold;">|</span>
<span class="t" style="transform:translate(110.80px,502.90px) rotate(0.03deg);font-size:7.9px;line-height:9px;color:#239a23;letter-spacing:-0.152px;font-weight:bold;">11</span>
<span class="t" style="transform:translate(146.30px,502.90px) rotate(0.03deg);font-size:7.9px;line-height:9px;color:#111;letter-spacing:0.000px;font-weight:bold;">0</span>
<span class="t" style="transform:translate(153.30px,502.70px) rotate(0.03deg);font-size:7.9px;line-height:9px;color:#222;letter-spacing:0.000px;font-weight:bold;">|</span>
<span class="t" style="transform:translate(158.30px,502.90px) rotate(0.03deg);font-size:7.9px;line-height:9px;color:#239a23;letter-spacing:-0.152px;font-weight:bold;">11</span>
<span class="t" style="transform:translate(193.80px,502.90px) rotate(0.03deg);font-size:7.9px;line-height:9px;color:#111;letter-spacing:0.000px;font-weight:bold;">0</span>
<span class="t" style="transform:translate(200.80px,502.70px) rotate(0.03deg);font-size:7.9px;line-height:9px;color:#222;letter-spacing:0.000px;font-weight:bold;">|</span>
<span class="t" style="transform:translate(205.80px,502.90px) rotate(0.03deg);font-size:7.9px;line-height:9px;color:#239a23;letter-spacing:-0.152px;font-weight:bold;">11</span>
<svg style="left:0;top:306px" width="256" height="241" viewBox="0 306 256 241">
<path d="M37.5 313.5l3.300 3.400 6-8.600" fill="none" stroke="#44c444" stroke-width="2.300"/>
<path d="M85.3 313.5l3.300 3.400 6-8.600" fill="none" stroke="#44c444" stroke-width="2.300"/>
<path d="M132.8 313.5l3.300 3.400 6-8.600" fill="none" stroke="#44c444" stroke-width="2.300"/>
<path d="M180.3 313.5l3.300 3.400 6-8.600" fill="none" stroke="#44c444" stroke-width="2.300"/>
<path d="M227.8 313.5l3.300 3.400 6-8.600" fill="none" stroke="#44c444" stroke-width="2.300"/>
<path d="M37.5 361.3l3.300 3.400 6-8.600" fill="none" stroke="#44c444" stroke-width="2.300"/>
<path d="M85.3 361.3l3.300 3.400 6-8.600" fill="none" stroke="#44c444" stroke-width="2.300"/>
<path d="M132.8 361.3l3.300 3.400 6-8.600" fill="none" stroke="#44c444" stroke-width="2.300"/>
<path d="M180.3 361.3l3.300 3.400 6-8.600" fill="none" stroke="#44c444" stroke-width="2.300"/>
<path d="M227.8 361.3l3.300 3.400 6-8.600" fill="none" stroke="#44c444" stroke-width="2.300"/>
<path d="M37.5 409.9l3.300 3.400 6-8.600" fill="none" stroke="#44c444" stroke-width="2.300"/>
<path d="M85.3 409.9l3.300 3.400 6-8.600" fill="none" stroke="#44c444" stroke-width="2.300"/>
<path d="M132.8 409.9l3.300 3.400 6-8.600" fill="none" stroke="#44c444" stroke-width="2.300"/>
<path d="M180.3 409.9l3.300 3.400 6-8.600" fill="none" stroke="#44c444" stroke-width="2.300"/>
<path d="M227.8 409.9l3.300 3.400 6-8.600" fill="none" stroke="#44c444" stroke-width="2.300"/>
<path d="M37.5 458.6l3.300 3.400 6-8.600" fill="none" stroke="#44c444" stroke-width="2.300"/>
<path d="M85.3 458.6l3.300 3.400 6-8.600" fill="none" stroke="#44c444" stroke-width="2.300"/>
<path d="M132.8 458.6l3.300 3.400 6-8.600" fill="none" stroke="#44c444" stroke-width="2.300"/>
<path d="M180.3 458.6l3.300 3.400 6-8.600" fill="none" stroke="#44c444" stroke-width="2.300"/>
<path d="M227.8 458.6l3.300 3.400 6-8.600" fill="none" stroke="#44c444" stroke-width="2.300"/>
<path d="M37.5 507.7l3.300 3.400 6-8.600" fill="none" stroke="#44c444" stroke-width="2.300"/>
<path d="M85.3 507.7l3.300 3.400 6-8.600" fill="none" stroke="#44c444" stroke-width="2.300"/>
<path d="M132.8 507.7l3.300 3.400 6-8.600" fill="none" stroke="#44c444" stroke-width="2.300"/>
<path d="M180.3 507.7l3.300 3.400 6-8.600" fill="none" stroke="#44c444" stroke-width="2.300"/>
<path d="M227.8 507.7l3.300 3.400 6-8.600" fill="none" stroke="#44c444" stroke-width="2.300"/>
<path d="M6.3 328.500h5.600l4.400 5.200 28.700-1.400v12.400h-38.700z" fill="#00a80a" stroke="#333" stroke-width="0.6" />
<path d="M54 328.500h5.600l4.400 5.200 28.700-1.400v12.400h-38.700z" fill="#85606e" stroke="#333" stroke-width="0.6" />
<path d="M101.4 330.300h39v12.700h-34.500l-4.500-3.500z" fill="#5f9a82" stroke="#333" stroke-width="0.6" />
<path d="M107.9 339.500h22 M119.4 330.500v9" stroke="#ddd" stroke-width="1.300"/>
<path d="M149 330.300h39v12.700h-34.500l-4.500-3.500z" fill="#b07c4c" stroke="#333" stroke-width="0.6" />
<path d="M155.5 339.500h22 M167 330.500v9" stroke="#ddd" stroke-width="1.300"/>
<path d="M196.200 328.300h38.600v16.300h-38.600z" fill="#d3c28e" stroke="#776" stroke-width="0.6" />
<circle cx="198.800" cy="336.500" r="3" fill="#fff" stroke="#776" stroke-width="0.500"/><circle cx="232.800" cy="331" r="0.600" fill="#554"/><circle cx="232.800" cy="342" r="0.600" fill="#554"/>
<path d="M6.300 377h39v16.400h-39z" fill="#b9588a" stroke="#543" stroke-width="0.6" rx="1"/>
<circle cx="9.400" cy="385.200" r="3" fill="#fff" stroke="#543" stroke-width="0.500"/>
<path d="M54 374.200h39v21.500h-39z" fill="#aa7a4a" stroke="#333" stroke-width="0.6" />
<circle cx="63.400" cy="385.200" r="3" fill="#fff" stroke="#333" stroke-width="0.500"/><circle cx="80.200" cy="379" r="1.600" fill="#fff" stroke="#333" stroke-width="0.500"/><circle cx="88.300" cy="391.400" r="1.800" fill="#fff" stroke="#333" stroke-width="0.500"/>
<circle cx="120.800" cy="385.300" r="12.300" fill="none" stroke="#333" stroke-width="6.400"/><circle cx="120.800" cy="385.300" r="12.300" fill="none" stroke="#7f9fff" stroke-width="5.400"/>
<path d="M149 379.300h39v11.900h-39z" fill="#ff5068" stroke="#333" stroke-width="0.6" />
<path d="M197.400 371.800h29v-1.500h7.800v6h-1.500v17h1.500v6h-7.800v-1.500h-29z" fill="#0a8444" stroke="#333" stroke-width="0.6" />
<circle cx="204.500" cy="385.400" r="3.500" fill="#fff" stroke="#333" stroke-width="0.500"/>
<path d="M6.300 429q0-1 1-1h37q1 0 1 1v9.200q0 1-1 1h-37q-1 0-1-1z" fill="#12b474" stroke="#333" stroke-width="0.6" />
<rect x="22" y="434.500" width="2.400" height="4.500" fill="#fff" stroke="#333" stroke-width="0.400"/>
<path d="M56 420.800h26.500v-1.500h8v4.800h-1.200v19h1.200v4.800h-8v-1.500h-26.500z" fill="#38f672" stroke="#333" stroke-width="0.6" />
<circle cx="120.800" cy="433.600" r="13.500" fill="none" stroke="#333" stroke-width="3.900"/><circle cx="120.800" cy="433.600" r="13.500" fill="none" stroke="#8a6578" stroke-width="2.900"/>
<path d="M149 430.500h39v6.500h-39z" fill="#5a9080" stroke="#333" stroke-width="0.6" />
<circle cx="180.400" cy="433.700" r="1.100" fill="#fff" stroke="#333" stroke-width="0.400"/>
<path d="M196.300 424.500h15.300v6h23.400v12h-38.700z" fill="#80cc55" stroke="#333" stroke-width="0.6" />
<rect x="199.800" y="426.300" width="8.400" height="1.700" rx="0.800" fill="#e8f4d8" stroke="#555" stroke-width="0.400"/>
<g transform="translate(-244.15,355.77) scale(0.357)"><path d="M717.1 343.2C720.2 337.7 715.6 339.5 717.9 333.0C720.2 326.5 718.9 328.5 724.1 323.6C729.3 318.7 727.2 320.5 733.5 318.2C739.8 315.9 734.6 316.1 742.9 316.6C751.2 317.1 749.7 318.4 758.5 319.7C767.3 321.0 762.1 321.2 769.4 320.5C776.7 319.8 773.6 319.0 780.4 317.7C787.2 316.4 783.6 315.9 789.8 316.6C796.0 317.3 793.4 316.3 799.1 319.7C804.8 323.1 803.0 321.3 806.9 326.8C810.8 332.3 809.3 330.4 810.8 336.1C812.3 341.8 812.1 338.3 811.3 344.0C810.5 349.7 811.5 347.9 808.5 353.3C805.5 358.7 807.5 356.4 802.3 360.3C797.1 364.2 799.2 362.4 792.9 365.0C786.6 367.6 790.8 365.6 783.5 368.2C776.2 370.8 779.3 369.4 771.0 372.8C762.7 376.2 767.9 374.1 758.5 378.3C749.1 382.5 753.3 381.4 742.9 385.3C732.5 389.2 735.1 388.4 727.3 390.0C719.5 391.6 725.2 391.3 719.4 390.0C713.6 388.7 715.5 390.0 710.0 386.1C704.5 382.2 706.1 384.5 703.0 378.3C699.9 372.1 700.9 374.2 700.7 367.4C700.5 360.6 699.7 364.0 702.3 358.0C704.9 352.0 703.6 354.3 708.5 349.4C713.4 344.5 714.0 348.7 717.1 343.2Z" fill="#5f9a7e" stroke="#222" stroke-width="1.800"/><path d="M724.9 354.1C725.4 350.2 726.2 349.3 728.8 346.3C731.4 343.3 728.5 342.7 732.7 345.0C736.9 347.3 736.6 347.7 741.3 353.3C746.0 358.9 746.3 358.5 746.8 361.9C747.3 365.3 747.3 363.5 742.9 363.5C738.5 363.5 738.7 363.7 733.5 361.9C728.3 360.1 730.2 360.6 727.3 358.0C724.4 355.4 724.4 358.0 724.9 354.1Z" fill="#fff" stroke="#222" stroke-width="1"/><circle cx="741.300" cy="341.100" r="3.400" fill="#fff" stroke="#222" stroke-width="1"/><circle cx="785.800" cy="340.800" r="3.400" fill="#fff" stroke="#222" stroke-width="1"/><circle cx="800.400" cy="347" r="5" fill="#fff" stroke="#222" stroke-width="1"/></g>
<g transform="translate(-101.65,355.77) scale(0.357)"><path d="M717.1 343.2C720.2 337.7 715.6 339.5 717.9 333.0C720.2 326.5 718.9 328.5 724.1 323.6C729.3 318.7 727.2 320.5 733.5 318.2C739.8 315.9 734.6 316.1 742.9 316.6C751.2 317.1 749.7 318.4 758.5 319.7C767.3 321.0 762.1 321.2 769.4 320.5C776.7 319.8 773.6 319.0 780.4 317.7C787.2 316.4 783.6 315.9 789.8 316.6C796.0 317.3 793.4 316.3 799.1 319.7C804.8 323.1 803.0 321.3 806.9 326.8C810.8 332.3 809.3 330.4 810.8 336.1C812.3 341.8 812.1 338.3 811.3 344.0C810.5 349.7 811.5 347.9 808.5 353.3C805.5 358.7 807.5 356.4 802.3 360.3C797.1 364.2 799.2 362.4 792.9 365.0C786.6 367.6 790.8 365.6 783.5 368.2C776.2 370.8 779.3 369.4 771.0 372.8C762.7 376.2 767.9 374.1 758.5 378.3C749.1 382.5 753.3 381.4 742.9 385.3C732.5 389.2 735.1 388.4 727.3 390.0C719.5 391.6 725.2 391.3 719.4 390.0C713.6 388.7 715.5 390.0 710.0 386.1C704.5 382.2 706.1 384.5 703.0 378.3C699.9 372.1 700.9 374.2 700.7 367.4C700.5 360.6 699.7 364.0 702.3 358.0C704.9 352.0 703.6 354.3 708.5 349.4C713.4 344.5 714.0 348.7 717.1 343.2Z" fill="#b07c4c" stroke="#222" stroke-width="1.800"/><path d="M724.9 354.1C725.4 350.2 726.2 349.3 728.8 346.3C731.4 343.3 728.5 342.7 732.7 345.0C736.9 347.3 736.6 347.7 741.3 353.3C746.0 358.9 746.3 358.5 746.8 361.9C747.3 365.3 747.3 363.5 742.9 363.5C738.5 363.5 738.7 363.7 733.5 361.9C728.3 360.1 730.2 360.6 727.3 358.0C724.4 355.4 724.4 358.0 724.9 354.1Z" fill="#fff" stroke="#222" stroke-width="1"/><circle cx="741.300" cy="341.100" r="3.400" fill="#fff" stroke="#222" stroke-width="1"/><circle cx="785.800" cy="340.800" r="3.400" fill="#fff" stroke="#222" stroke-width="1"/><circle cx="800.400" cy="347" r="5" fill="#fff" stroke="#222" stroke-width="1"/></g>
<circle cx="73.300" cy="482.200" r="15.200" fill="#12b878" stroke="#333" stroke-width="0.600"/><rect x="70.800" y="479.700" width="5" height="5" rx="0.600" fill="#fff" stroke="#333" stroke-width="0.400"/><ellipse cx="73.300" cy="492.300" rx="7.500" ry="3" fill="#fff" stroke="#333" stroke-width="0.400"/>
<circle cx="121" cy="482.200" r="15" fill="#3c8282" stroke="#333" stroke-width="0.600"/><circle cx="121" cy="482.200" r="2.100" fill="#fff" stroke="#333" stroke-width="0.400"/>
<path d="M210.200 467.300h11.400v29.800h-11.400z" fill="#a2baa2" stroke="#333" stroke-width="0.6" />
<circle cx="215.900" cy="469.500" r="0.600" fill="#333"/><circle cx="215.900" cy="495" r="0.600" fill="#333"/>
<path d="M6.300 524.400h39.200v13h-39.200z" fill="#44b2ff" stroke="#333" stroke-width="0.6" />
<circle cx="7.500" cy="531" r="0.800" fill="#223"/><circle cx="44.300" cy="531" r="0.800" fill="#223"/><circle cx="23" cy="535.500" r="0.900" fill="none" stroke="#223" stroke-width="0.400"/>
<path d="M53.800 529.300h39.200q-0.500 2.900-3 2.900h-33.200q-2.500 0-3-2.900z" fill="#a05062" stroke="#444" stroke-width="0.4" />
<path d="M101.500 530h38.800v1.700h-38.800z" fill="#80783a" stroke="#554" stroke-width="0.3" />
<path d="M148.600 525.400h39.400v11.100h-39.400z" fill="#a2baa2" stroke="#333" stroke-width="0.6" />
<path d="M195.700 518.400h39.500v25h-39.500z" fill="#6262ff" stroke="#333" stroke-width="0.6" />
</svg>
<div class="b" style="left:248.9px;top:400.5px;width:2.9px;height:49.3px;background:#a6a6a6;border-radius:1.500px;"></div>
<div class="b" style="left:0px;top:547px;width:256px;height:13.7px;background:#e6e6e6;"></div>
<div class="b" style="left:0px;top:547px;width:47.3px;height:14px;background:#fdfdfd;"></div>
<div class="b" style="left:0px;top:560.5px;width:47.3px;height:1.3px;background:#3f6fb5;"></div>
<div class="b" style="left:83.3px;top:548.5px;width:1px;height:12px;background:#c8c8c8;"></div>
<span class="t" style="transform:translate(4.70px,551.00px) rotate(0.03deg);font-size:7.8px;line-height:9px;color:#3f6fb5;letter-spacing:-0.137px;">Part Viewer</span>
<span class="t" style="transform:translate(52.30px,551.00px) rotate(0.03deg);font-size:7.8px;line-height:9px;color:#666;letter-spacing:-0.176px;">Part List</span>
<div class="b" style="left:256px;top:104.3px;width:1.5px;height:456.4px;background:#ebebeb;"></div>
<div class="b" style="left:257.5px;top:104.3px;width:2.5px;height:456.4px;background:#dadad6;"></div>
<svg style="left:260px;top:104px" width="764" height="456.700" viewBox="260 104 764 456.700">
<defs><linearGradient id="bg" x1="0" y1="0" x2="0" y2="1"><stop offset="0" stop-color="#20207e"/><stop offset="0.210" stop-color="#18186c"/><stop offset="0.450" stop-color="#14145e"/><stop offset="0.690" stop-color="#0c0a40"/><stop offset="0.950" stop-color="#030324"/><stop offset="1" stop-color="#020220"/></linearGradient></defs>
<rect x="260" y="104" width="764" height="456.700" fill="url(#bg)"/>
<defs><linearGradient id="fd" x1="0" y1="0" x2="0" y2="1"><stop offset="0" stop-color="#2424a0" stop-opacity="0.400"/><stop offset="0.600" stop-color="#2424a0" stop-opacity="0.150"/><stop offset="1" stop-color="#2424a0" stop-opacity="0"/></linearGradient></defs><rect x="260" y="104.600" width="3.500" height="457" fill="url(#fd)"/><rect x="261" y="104.600" width="762" height="5" fill="#2424a0" opacity="0.500"/><rect x="1016.500" y="104.600" width="6.500" height="457" fill="url(#fd)"/><rect x="260" y="104" width="764" height="0.700" fill="#8a8aa0"/><rect x="1022.800" y="104" width="1.200" height="457.500" fill="#9090c0"/>
<rect x="269.600" y="149.200" width="742" height="370.200" fill="none" stroke="#6464a0" stroke-width="0.800"/>
<rect x="1008.300" y="150.500" width="0.700" height="367" fill="#6a6aa0"/>
<path d="M272 151.300H721.300V163.400L702 183.500H648.700V197.200H341.600V184H309.700V197.200H272Z" fill="#7b8aa6" stroke="#c8c820" stroke-width="0.8" stroke-linejoin="round" />
<path d="M312.800 186h23.200v7.300h-23.200z" fill="#8ed45c" stroke="#c8c820" stroke-width="0.8" stroke-linejoin="round" />
<rect x="327.200" y="193.800" width="7.200" height="2.800" fill="#a89838" stroke="#c8c820" stroke-width="0.300"/>
<path d="M272 199H341.500V208.400L400 213.500Q470 219 527 219Q590 218.500 644 214L704 207.500V203.800L791.200 193.400V209.800H824V222.500H834.400V281H823.700V315.300L704 303.100V298.500L644 292.800Q585 287.400 523 287.200Q470 287.600 420 292L342.500 299.400V306H272Z" fill="#6464fc" stroke="#c8c820" stroke-width="0.8" stroke-linejoin="round" />
<circle cx="284.800" cy="211.800" r="7.600" fill="#120e50" stroke="#c8c820" stroke-width="0.800"/><circle cx="284.800" cy="211.800" r="6.300" fill="none" stroke="#6a6a30" stroke-width="0.500"/>
<circle cx="797.400" cy="304" r="4.500" fill="#120e50" stroke="#c8c820" stroke-width="0.800"/><circle cx="797.400" cy="304" r="3.300" fill="none" stroke="#6a6a30" stroke-width="0.500"/>
<circle cx="491.800" cy="270.300" r="3.400" fill="#120e50" stroke="#c8c820" stroke-width="0.800"/><circle cx="491.800" cy="270.300" r="1.800" fill="none" stroke="#c8c820" stroke-width="0.500"/>
<path d="M416.600 227.500H461V243.500H416.600Z" fill="#120e50" stroke="#c8c820" stroke-width="0.8" stroke-linejoin="round" />
<path d="M397.800 260.600H461V275.600H397.800Z" fill="#120e50" stroke="#c8c820" stroke-width="0.8" stroke-linejoin="round" />
<path d="M421 232.800h20v8.800h-20z" fill="#4a9494" stroke="#c8c820" stroke-width="0.8" stroke-linejoin="round" />
<circle cx="425.3" cy="237.2" r="1.2" fill="#3a3a20" stroke="#a8a828" stroke-width="0.500"/>
<circle cx="436.5" cy="237.2" r="1.2" fill="#3a3a20" stroke="#a8a828" stroke-width="0.500"/>
<path d="M400.600 264h19.400v9h-19.400z" fill="#4a9494" stroke="#c8c820" stroke-width="0.8" stroke-linejoin="round" />
<circle cx="404.8" cy="268.5" r="1.3" fill="#8a7a40" stroke="#a8a828" stroke-width="0.500"/>
<circle cx="415.8" cy="268.5" r="1.3" fill="#8a7a40" stroke="#a8a828" stroke-width="0.500"/>
<path d="M377.800 264.700h3.200v11.800h-3.200z" fill="#3a3a30" stroke="#c8c820" stroke-width="0.8" stroke-linejoin="round" />
<path d="M346 199.500h10v6.500h-10z" fill="#6a6aee" stroke="#c8c820" stroke-width="0.8" stroke-linejoin="round" />
<path d="M363 199.500h28v8.500h-28z" fill="#bcc6a6" stroke="#c8c820" stroke-width="0.8" stroke-linejoin="round" />
<path d="M397.300 199h6.700v12h-6.700z" fill="#d8a050" stroke="#c8c820" stroke-width="0.8" stroke-linejoin="round" />
<circle cx="400.6" cy="202.5" r="0.9" fill="#3a3a20" stroke="#a8a828" stroke-width="0.500"/>
<circle cx="400.6" cy="207.5" r="1.1" fill="#3a3a20" stroke="#a8a828" stroke-width="0.500"/>
<path d="M407.500 199.500h18.500v12.500h-18.500z" fill="#c4ccd0" stroke="#c8c820" stroke-width="0.8" stroke-linejoin="round" />
<rect x="408.500" y="200.600" width="5.500" height="2.200" rx="1" fill="#8a7a30" stroke="#c8c820" stroke-width="0.400"/><rect x="408.500" y="208.400" width="5.500" height="2.200" rx="1" fill="#8a7a30" stroke="#c8c820" stroke-width="0.400"/>
<path d="M428.500 201h38v13h-38z" fill="#00b400" stroke="#c8c820" stroke-width="0.8" stroke-linejoin="round" />
<rect x="468.500" y="199.600" width="32.300" height="16.400" rx="4.800" fill="#0e8c42" stroke="#c8c820" stroke-width="0.800"/>
<rect x="502.800" y="200.500" width="31.800" height="16.500" rx="4.800" fill="#0e8c42" stroke="#c8c820" stroke-width="0.800"/>
<path d="M536.400 204h38.400v12h-38.400z" fill="#8b6a78" stroke="#c8c820" stroke-width="0.8" stroke-linejoin="round" />
<path d="M577.300 200h18.700v15.400h-18.700z" fill="#ffd878" stroke="#c8c820" stroke-width="0.8" stroke-linejoin="round" />
<path d="M601 209.800h27.300v-9.400h9.400v11.800h-36.700z" fill="#1e96ff" stroke="#c8c820" stroke-width="0.5" stroke-linejoin="round" />
<path d="M601 209.800h27.300v2.400h-27.300z" fill="#48b0e0"/>
<circle cx="633" cy="203.5" r="0.9" fill="#b07030" stroke="#a8a828" stroke-width="0.500"/>
<circle cx="636" cy="203.5" r="0.9" fill="#b07030" stroke="#a8a828" stroke-width="0.500"/>
<path d="M652.500 186.900h45.900v19.100h-45.900q-1 0-1-1v-5.500a3 3 0 0 0 0-6v-5.600q0-1 1-1z" fill="#d3c28e" stroke="#c8c820" stroke-width="0.8" stroke-linejoin="round" />
<circle cx="655" cy="196" r="3" fill="#120e50" stroke="#c8c820" stroke-width="0.600"/>
<circle cx="694.7" cy="190.5" r="1" fill="#3a3a20" stroke="#a8a828" stroke-width="0.500"/>
<circle cx="694.7" cy="202.5" r="1" fill="#3a3a20" stroke="#a8a828" stroke-width="0.500"/>
<path d="M705 187.800h22q1.800 0 1.800 1.800v7.100q0 1.800-1.800 1.800h-22q-2 0-2-1.800v-7.100q0-1.800 2-1.800z" fill="#e81e50" stroke="#d89030" stroke-width="0.8" stroke-linejoin="round" />
<circle cx="712.5" cy="189.7" r="0.8" fill="#b07030" stroke="#a8a828" stroke-width="0.500"/>
<circle cx="719.5" cy="189.7" r="0.8" fill="#b07030" stroke="#a8a828" stroke-width="0.500"/>
<path d="M724.300 151.300H814.300V177.500H801.500V190.300H743.400V175.600H724.300Z" fill="#d2fc78" stroke="#c8c820" stroke-width="0.8" stroke-linejoin="round" />
<circle cx="743.3" cy="166.8" r="1.6" fill="#3a3a20" stroke="#a8a828" stroke-width="0.500"/>
<circle cx="748" cy="185.3" r="1.9" fill="#3a3a20" stroke="#a8a828" stroke-width="0.500"/>
<circle cx="793.5" cy="185.3" r="1.9" fill="#3a3a20" stroke="#a8a828" stroke-width="0.500"/>
<rect x="770" y="162" width="10.500" height="3" rx="1.500" fill="#4a4a20" stroke="#8a8a30" stroke-width="0.500"/><rect x="784.500" y="162" width="10.500" height="3" rx="1.500" fill="#4a4a20" stroke="#8a8a30" stroke-width="0.500"/>
<path d="M804.300 183H817V200L812 208H796.300V203.800L804.300 196Z" fill="#32e472" stroke="#c8c820" stroke-width="0.8" stroke-linejoin="round" />
<circle cx="807" cy="185.5" r="0.9" fill="#8a7a30" stroke="#a8a828" stroke-width="0.500"/>
<circle cx="814.5" cy="190.5" r="0.9" fill="#8a7a30" stroke="#a8a828" stroke-width="0.500"/>
<circle cx="809" cy="197" r="0.9" fill="#8a7a30" stroke="#a8a828" stroke-width="0.500"/>
<circle cx="799.5" cy="206" r="0.9" fill="#8a7a30" stroke="#a8a828" stroke-width="0.500"/>
<circle cx="807" cy="206" r="0.9" fill="#8a7a30" stroke="#a8a828" stroke-width="0.500"/>
<circle cx="823" cy="157.8" r="6.500" fill="#1eb464" stroke="#28d878" stroke-width="0.900"/><circle cx="823" cy="157.8" r="2" fill="#3a7a30" stroke="#c8c820" stroke-width="0.500"/><circle cx="823" cy="157.8" r="0.700" fill="#503010"/>
<circle cx="827.4" cy="172.3" r="6.500" fill="#1eb464" stroke="#28d878" stroke-width="0.900"/><circle cx="827.4" cy="172.3" r="2" fill="#3a7a30" stroke="#c8c820" stroke-width="0.500"/><circle cx="827.4" cy="172.3" r="0.700" fill="#503010"/>
<circle cx="825.5" cy="187.3" r="6.500" fill="#1eb464" stroke="#28d878" stroke-width="0.900"/><circle cx="825.5" cy="187.3" r="2" fill="#3a7a30" stroke="#c8c820" stroke-width="0.500"/><circle cx="825.5" cy="187.3" r="0.700" fill="#503010"/>
<circle cx="828.7" cy="202.4" r="6.500" fill="#1eb464" stroke="#28d878" stroke-width="0.900"/><circle cx="828.7" cy="202.4" r="2" fill="#3a7a30" stroke="#c8c820" stroke-width="0.500"/><circle cx="828.7" cy="202.4" r="0.700" fill="#503010"/>
<circle cx="828.8" cy="323.8" r="6.500" fill="#1eb464" stroke="#28d878" stroke-width="0.900"/><circle cx="828.8" cy="323.8" r="2" fill="#3a7a30" stroke="#c8c820" stroke-width="0.500"/><circle cx="828.8" cy="323.8" r="0.700" fill="#503010"/>
<circle cx="828.8" cy="338.8" r="6.500" fill="#1eb464" stroke="#28d878" stroke-width="0.900"/><circle cx="828.8" cy="338.8" r="2" fill="#3a7a30" stroke="#c8c820" stroke-width="0.500"/><circle cx="828.8" cy="338.8" r="0.700" fill="#503010"/>
<circle cx="828.8" cy="395" r="6.500" fill="#1eb464" stroke="#28d878" stroke-width="0.900"/><circle cx="828.8" cy="395" r="2" fill="#3a7a30" stroke="#c8c820" stroke-width="0.500"/><circle cx="828.8" cy="395" r="0.700" fill="#503010"/>
<circle cx="827.5" cy="411.5" r="6.500" fill="#1eb464" stroke="#28d878" stroke-width="0.900"/><circle cx="827.5" cy="411.5" r="2" fill="#3a7a30" stroke="#c8c820" stroke-width="0.500"/><circle cx="827.5" cy="411.5" r="0.700" fill="#503010"/>
<circle cx="814.7" cy="419.8" r="6.500" fill="#1eb464" stroke="#28d878" stroke-width="0.900"/><circle cx="814.7" cy="419.8" r="2" fill="#3a7a30" stroke="#c8c820" stroke-width="0.500"/><circle cx="814.7" cy="419.8" r="0.700" fill="#503010"/>
<circle cx="695.6" cy="344.8" r="6.500" fill="#1eb464" stroke="#28d878" stroke-width="0.900"/><circle cx="695.6" cy="344.8" r="2" fill="#3a7a30" stroke="#c8c820" stroke-width="0.500"/><circle cx="695.6" cy="344.8" r="0.700" fill="#503010"/>
<path d="M837.600 151.300H1003V419.400H837.600Z M861.600 264.300V379H977.300V264.300Z" fill="#b5d682" stroke="#c8c820" stroke-width="0.8" stroke-linejoin="round" fill-rule="evenodd"/>
<rect x="861.600" y="264.300" width="115.700" height="114.700" fill="#120e50" stroke="#6a6a30" stroke-width="0.500"/>
<path d="M865.400 267H954.800V292.800H941.700V305.600H883.600V291.500H865.400Z" fill="#7b8aa6" stroke="#c8c820" stroke-width="0.8" stroke-linejoin="round" />
<circle cx="883.8" cy="282.3" r="1.3" fill="#3a3a20" stroke="#a8a828" stroke-width="0.500"/>
<circle cx="888.5" cy="301" r="1.8" fill="#3a3a20" stroke="#a8a828" stroke-width="0.500"/>
<circle cx="933.8" cy="301" r="1.8" fill="#3a3a20" stroke="#a8a828" stroke-width="0.500"/>
<rect x="910" y="278.200" width="10" height="2.800" rx="1.400" fill="#4a4a20" stroke="#c8c820" stroke-width="0.500"/><rect x="925" y="278.200" width="10" height="2.800" rx="1.400" fill="#4a4a20" stroke="#c8c820" stroke-width="0.500"/>
<path d="M878 338.400H935.200V352.800H954.800V377.200H865.400V351.500H878Z" fill="#7b8aa6" stroke="#c8c820" stroke-width="0.8" stroke-linejoin="round" />
<circle cx="885.2" cy="343" r="1.8" fill="#3a3a20" stroke="#a8a828" stroke-width="0.500"/>
<circle cx="930.6" cy="343" r="1.8" fill="#3a3a20" stroke="#a8a828" stroke-width="0.500"/>
<circle cx="935.2" cy="361.5" r="1.3" fill="#3a3a20" stroke="#a8a828" stroke-width="0.500"/>
<rect x="883.500" y="363.300" width="10" height="2.800" rx="1.400" fill="#8a7a30" stroke="#c8c820" stroke-width="0.500"/><rect x="898" y="363.300" width="10" height="2.800" rx="1.400" fill="#8a7a30" stroke="#c8c820" stroke-width="0.500"/>
<path d="M958.500 272.200h7.700q1 0 1 1V297.500h7q1 0 1 1v7.800q0 1-1 1h-23.400q-1 0-1-1v-7.800q0-1 1-1h7.700V273.200q0-1 1-1z" fill="#6a6afc" stroke="#c8c820" stroke-width="0.8" stroke-linejoin="round" />
<circle cx="964.5" cy="274.8" r="0.9" fill="#6a6a30" stroke="#a8a828" stroke-width="0.500"/>
<circle cx="960" cy="281.8" r="0.9" fill="#6a6a30" stroke="#a8a828" stroke-width="0.500"/>
<circle cx="951.8" cy="299.5" r="0.9" fill="#6a6a30" stroke="#a8a828" stroke-width="0.500"/>
<circle cx="951.8" cy="305" r="0.9" fill="#6a6a30" stroke="#a8a828" stroke-width="0.500"/>
<circle cx="973" cy="299.5" r="0.9" fill="#6a6a30" stroke="#a8a828" stroke-width="0.500"/>
<circle cx="973" cy="305" r="0.9" fill="#6a6a30" stroke="#a8a828" stroke-width="0.500"/>
<path d="M936.700 310.600h8.300q1 0 1 1V318h24.700q1 0 1 1v7.500q0 1-1 1H946v6.500q0 1-1 1h-8.300q-1 0-1-1V311.600q0-1 1-1z" fill="#6a6afc" stroke="#c8c820" stroke-width="0.8" stroke-linejoin="round" />
<circle cx="938.3" cy="312.8" r="0.9" fill="#6a6a30" stroke="#a8a828" stroke-width="0.500"/>
<circle cx="943.8" cy="312.8" r="0.9" fill="#6a6a30" stroke="#a8a828" stroke-width="0.500"/>
<circle cx="938.3" cy="333" r="0.9" fill="#6a6a30" stroke="#a8a828" stroke-width="0.500"/>
<circle cx="943.8" cy="333" r="0.9" fill="#6a6a30" stroke="#a8a828" stroke-width="0.500"/>
<circle cx="962" cy="320.8" r="0.9" fill="#6a6a30" stroke="#a8a828" stroke-width="0.500"/>
<circle cx="969" cy="325" r="0.9" fill="#6a6a30" stroke="#a8a828" stroke-width="0.500"/>
<path d="M950.200 339.700h23.800q1 0 1 1v8.300q0 1-1 1h-7.300V375q0 1-1 1h-7.400q-1 0-1-1V350h-7.100q-1 0-1-1v-8.300q0-1 1-1z" fill="#6a6afc" stroke="#c8c820" stroke-width="0.8" stroke-linejoin="round" />
<circle cx="951.8" cy="341.8" r="0.9" fill="#6a6a30" stroke="#a8a828" stroke-width="0.500"/>
<circle cx="951.8" cy="347.5" r="0.9" fill="#6a6a30" stroke="#a8a828" stroke-width="0.500"/>
<circle cx="973" cy="341.8" r="0.9" fill="#6a6a30" stroke="#a8a828" stroke-width="0.500"/>
<circle cx="973" cy="347.5" r="0.9" fill="#6a6a30" stroke="#a8a828" stroke-width="0.500"/>
<circle cx="964" cy="366" r="0.9" fill="#6a6a30" stroke="#a8a828" stroke-width="0.500"/>
<circle cx="960" cy="373" r="0.9" fill="#6a6a30" stroke="#a8a828" stroke-width="0.500"/>
<path d="M870.500 312H930.500V333H878.500Q870.500 331 870.500 322Z" fill="#5f9a82" stroke="#c8c820" stroke-width="0.8" stroke-linejoin="round" />
<path d="M880 325.900h16.300V312h2.600v13.900h16.600v1.700H880z" fill="#120e50" stroke="#c8c820" stroke-width="0.500"/>
<path d="M349.700 301.300H377.800L372.500 306.500H354.700Z" fill="#9072b4" stroke="#c8c820" stroke-width="0.8" stroke-linejoin="round" />
<path d="M380 297.500h23v4.700h-23z" fill="#5a9a8a" stroke="#c8c820" stroke-width="0.8" stroke-linejoin="round" />
<circle cx="398.5" cy="299.8" r="0.8" fill="#3a3a20" stroke="#a8a828" stroke-width="0.500"/>
<path d="M383.800 304H412.300V295.300H421.700V306.500H383.800Z" fill="#8a96b4" stroke="#c8c820" stroke-width="0.8" stroke-linejoin="round" />
<circle cx="416" cy="297.5" r="0.8" fill="#3a3a20" stroke="#a8a828" stroke-width="0.500"/>
<circle cx="419.5" cy="297.5" r="0.8" fill="#3a3a20" stroke="#a8a828" stroke-width="0.500"/>
<path d="M424.700 294h17.600v12.500h-17.600z" fill="#4a9494" stroke="#c8c820" stroke-width="0.8" stroke-linejoin="round" />
<path d="M436.300 295v10.500" stroke="#b89a30" stroke-width="1"/>
<path d="M445.300 294h37.700v12.500h-37.700z" fill="#8b6a78" stroke="#c8c820" stroke-width="0.8" stroke-linejoin="round" />
<path d="M485.800 300.300V296.500Q487.500 293.500 489 296.500Q510 291.800 524 291.800Q540 291.800 559.800 296.500Q561.500 293.500 563 296.500V300.300H532V301.500H516V300.300Z" fill="#b8d880" stroke="#c8c820" stroke-width="0.8" stroke-linejoin="round" />
<circle cx="524" cy="297" r="1" fill="#8a5a30" stroke="#a8a828" stroke-width="0.500"/>
<path d="M487 301.900H668.500L665.800 306.700H487Q485.200 306.700 485.200 304.300Q485.200 301.900 487 301.900Z" fill="#ffcc30" stroke="#e0c020" stroke-width="0.4" stroke-linejoin="round" />
<path d="M569.300 295.300h57.500q2.500 0 2.500 2.500q0 2.500-2.500 2.500h-57.500q-2.500 0-2.500-2.500q0-2.500 2.500-2.500z" fill="#d28264" stroke="#c8c820" stroke-width="0.8" stroke-linejoin="round" />
<path d="M611.500 287.800L633 288.900L632.600 291.300L611.300 290.200Z" fill="#a8a030" opacity="0.900"/>
<path d="M272 308.800H686.800V321.600H272Z" fill="#0e8c42" stroke="#c8c820" stroke-width="0.8" stroke-linejoin="round" />
<circle cx="275.4" cy="315.300" r="1.900" fill="#2a3a20" stroke="#c8c820" stroke-width="0.700"/>
<circle cx="356.8" cy="315.300" r="1.900" fill="#2a3a20" stroke="#c8c820" stroke-width="0.700"/>
<circle cx="438.5" cy="315.300" r="1.900" fill="#2a3a20" stroke="#c8c820" stroke-width="0.700"/>
<circle cx="520.1" cy="315.300" r="1.900" fill="#2a3a20" stroke="#c8c820" stroke-width="0.700"/>
<circle cx="601.7" cy="315.300" r="1.900" fill="#2a3a20" stroke="#c8c820" stroke-width="0.700"/>
<circle cx="683.3" cy="315.300" r="1.900" fill="#2a3a20" stroke="#c8c820" stroke-width="0.700"/>
<path d="M284.400 323.800H685.300V354.700H698V504.700H671.700V516.800H298.400V504.600H272V354.700H284.400Z" fill="#408080" stroke="#c8c820" stroke-width="0.8" stroke-linejoin="round" />
<circle cx="299.3" cy="330" r="1.5" fill="#5a5a30" stroke="#a8a828" stroke-width="0.500"/>
<circle cx="655.2" cy="328.3" r="1.5" fill="#5a5a30" stroke="#a8a828" stroke-width="0.500"/>
<circle cx="669.5" cy="329.3" r="1.5" fill="#5a5a30" stroke="#a8a828" stroke-width="0.500"/>
<circle cx="620.7" cy="328.3" r="1.4" fill="#5a5a30" stroke="#a8a828" stroke-width="0.500"/>
<path d="M272.500 339V329.500L277.500 326H279.700V339Z" fill="#ff5462" stroke="#d89030" stroke-width="0.8" stroke-linejoin="round" />
<circle cx="275.6" cy="331.5" r="0.9" fill="#b03030" stroke="#a8a828" stroke-width="0.500"/>
<path d="M272.500 341.500h7.200v11h-7.200z" fill="#4666c4" stroke="#c8c820" stroke-width="0.8" stroke-linejoin="round" />
<circle cx="276" cy="343.8" r="1.4" fill="#404070" stroke="#a8a828" stroke-width="0.500"/>
<path d="M272.500 509h19v7.300h-19z" fill="#5cc0ff" stroke="#c8c820" stroke-width="0.8" stroke-linejoin="round" />
<circle cx="276" cy="512" r="0.9" fill="#8a5a30" stroke="#a8a828" stroke-width="0.500"/>
<circle cx="287" cy="512" r="0.9" fill="#8a5a30" stroke="#a8a828" stroke-width="0.500"/>
<path d="M689 300.300h10q1 0 1 1V308.400h24.600q1 0 1 1v6.800q0 1-1 1H700v7.100q0 1-1 1h-10q-1 0-1-1V301.300q0-1 1-1z" fill="#6a6afc" stroke="#c8c820" stroke-width="0.8" stroke-linejoin="round" />
<circle cx="691" cy="302.3" r="0.9" fill="#6a6a30" stroke="#a8a828" stroke-width="0.500"/>
<circle cx="696.7" cy="302.3" r="0.9" fill="#6a6a30" stroke="#a8a828" stroke-width="0.500"/>
<circle cx="691" cy="323" r="0.9" fill="#6a6a30" stroke="#a8a828" stroke-width="0.500"/>
<circle cx="696.7" cy="323" r="0.9" fill="#6a6a30" stroke="#a8a828" stroke-width="0.500"/>
<circle cx="715.3" cy="310.7" r="0.9" fill="#6a6a30" stroke="#a8a828" stroke-width="0.500"/>
<circle cx="722" cy="315" r="0.9" fill="#6a6a30" stroke="#a8a828" stroke-width="0.500"/>
<path d="M689 327.500H704.400V321.500H710.600V333.700H689Z" fill="#a4e4d4" stroke="#c8c820" stroke-width="0.8" stroke-linejoin="round" />
<circle cx="698" cy="330.8" r="0.9" fill="#8a5a30" stroke="#a8a828" stroke-width="0.500"/>
<circle cx="706.5" cy="323.5" r="0.8" fill="#8a5a30" stroke="#a8a828" stroke-width="0.500"/>
<circle cx="709" cy="323.5" r="0.8" fill="#8a5a30" stroke="#a8a828" stroke-width="0.500"/>
<path d="M717.1 343.2C720.2 337.7 715.6 339.5 717.9 333.0C720.2 326.5 718.9 328.5 724.1 323.6C729.3 318.7 727.2 320.5 733.5 318.2C739.8 315.9 734.6 316.1 742.9 316.6C751.2 317.1 749.7 318.4 758.5 319.7C767.3 321.0 762.1 321.2 769.4 320.5C776.7 319.8 773.6 319.0 780.4 317.7C787.2 316.4 783.6 315.9 789.8 316.6C796.0 317.3 793.4 316.3 799.1 319.7C804.8 323.1 803.0 321.3 806.9 326.8C810.8 332.3 809.3 330.4 810.8 336.1C812.3 341.8 812.1 338.3 811.3 344.0C810.5 349.7 811.5 347.9 808.5 353.3C805.5 358.7 807.5 356.4 802.3 360.3C797.1 364.2 799.2 362.4 792.9 365.0C786.6 367.6 790.8 365.6 783.5 368.2C776.2 370.8 779.3 369.4 771.0 372.8C762.7 376.2 767.9 374.1 758.5 378.3C749.1 382.5 753.3 381.4 742.9 385.3C732.5 389.2 735.1 388.4 727.3 390.0C719.5 391.6 725.2 391.3 719.4 390.0C713.6 388.7 715.5 390.0 710.0 386.1C704.5 382.2 706.1 384.5 703.0 378.3C699.9 372.1 700.9 374.2 700.7 367.4C700.5 360.6 699.7 364.0 702.3 358.0C704.9 352.0 703.6 354.3 708.5 349.4C713.4 344.5 714.0 348.7 717.1 343.2Z" fill="#6c9c82" stroke="#c8c820" stroke-width="0.8" stroke-linejoin="round" />
<path d="M724.9 354.1C725.4 350.2 726.2 349.3 728.8 346.3C731.4 343.3 728.5 342.7 732.7 345.0C736.9 347.3 736.6 347.7 741.3 353.3C746.0 358.9 746.3 358.5 746.8 361.9C747.3 365.3 747.3 363.5 742.9 363.5C738.5 363.5 738.7 363.7 733.5 361.9C728.3 360.1 730.2 360.6 727.3 358.0C724.4 355.4 724.4 358.0 724.9 354.1Z" fill="#120e50" stroke="#c8c820" stroke-width="0.8" stroke-linejoin="round" />
<path d="M726.500 349.500c1.500-3 3.500-4.800 6-5" stroke="#8a8a30" stroke-width="0.600" fill="none"/>
<circle cx="741.3" cy="341.1" r="3.4" fill="#120e50" stroke="#c8c820" stroke-width="0.700"/><circle cx="741.3" cy="341.1" r="4.7" fill="none" stroke="#8a8a40" stroke-width="0.500"/>
<circle cx="785.8" cy="340.8" r="3.4" fill="#120e50" stroke="#c8c820" stroke-width="0.700"/><circle cx="785.8" cy="340.8" r="4.7" fill="none" stroke="#8a8a40" stroke-width="0.500"/>
<circle cx="800.4" cy="347" r="5" fill="#120e50" stroke="#c8c820" stroke-width="0.700"/><circle cx="800.4" cy="347" r="6.3" fill="none" stroke="#8a8a40" stroke-width="0.500"/>
<circle cx="724.7" cy="323.5" r="0.9" fill="#5a7a50" stroke="#a8a828" stroke-width="0.500"/>
<circle cx="741" cy="317.5" r="0.9" fill="#5a7a50" stroke="#a8a828" stroke-width="0.500"/>
<circle cx="753" cy="321" r="0.9" fill="#5a7a50" stroke="#a8a828" stroke-width="0.500"/>
<circle cx="774.3" cy="321" r="0.9" fill="#5a7a50" stroke="#a8a828" stroke-width="0.500"/>
<circle cx="786" cy="317.5" r="0.9" fill="#5a7a50" stroke="#a8a828" stroke-width="0.500"/>
<circle cx="802.5" cy="324" r="0.9" fill="#5a7a50" stroke="#a8a828" stroke-width="0.500"/>
<circle cx="718.5" cy="343.5" r="0.9" fill="#5a7a50" stroke="#a8a828" stroke-width="0.500"/>
<circle cx="708" cy="349" r="0.9" fill="#5a7a50" stroke="#a8a828" stroke-width="0.500"/>
<circle cx="702" cy="365.5" r="0.9" fill="#5a7a50" stroke="#a8a828" stroke-width="0.500"/>
<circle cx="702.5" cy="372" r="0.9" fill="#5a7a50" stroke="#a8a828" stroke-width="0.500"/>
<circle cx="707.5" cy="380.5" r="0.9" fill="#5a7a50" stroke="#a8a828" stroke-width="0.500"/>
<circle cx="724.5" cy="388.5" r="0.9" fill="#5a7a50" stroke="#a8a828" stroke-width="0.500"/>
<circle cx="740.5" cy="383.5" r="0.9" fill="#5a7a50" stroke="#a8a828" stroke-width="0.500"/>
<circle cx="754.5" cy="378" r="0.9" fill="#5a7a50" stroke="#a8a828" stroke-width="0.500"/>
<circle cx="767.5" cy="372.5" r="0.9" fill="#5a7a50" stroke="#a8a828" stroke-width="0.500"/>
<circle cx="782" cy="364.5" r="0.9" fill="#5a7a50" stroke="#a8a828" stroke-width="0.500"/>
<circle cx="786.5" cy="364.5" r="0.9" fill="#5a7a50" stroke="#a8a828" stroke-width="0.500"/>
<circle cx="803" cy="357" r="0.9" fill="#5a7a50" stroke="#a8a828" stroke-width="0.500"/>
<circle cx="808.5" cy="341" r="0.9" fill="#5a7a50" stroke="#a8a828" stroke-width="0.500"/>
<circle cx="748.5" cy="337.5" r="0.9" fill="#5a7a50" stroke="#a8a828" stroke-width="0.500"/>
<circle cx="761.5" cy="338.5" r="0.9" fill="#5a7a50" stroke="#a8a828" stroke-width="0.500"/>
<circle cx="767.5" cy="341" r="0.9" fill="#5a7a50" stroke="#a8a828" stroke-width="0.500"/>
<circle cx="778.5" cy="337.5" r="0.9" fill="#5a7a50" stroke="#a8a828" stroke-width="0.500"/>
<circle cx="791" cy="346.5" r="0.9" fill="#5a7a50" stroke="#a8a828" stroke-width="0.500"/>
<circle cx="796.5" cy="353.5" r="0.9" fill="#5a7a50" stroke="#a8a828" stroke-width="0.500"/>
<circle cx="749.5" cy="364" r="0.9" fill="#5a7a50" stroke="#a8a828" stroke-width="0.500"/>
<circle cx="783.4" cy="401.5" r="21.500" fill="none" stroke="#c07a7c" stroke-width="7.400"/>
<circle cx="783.4" cy="379.2" r="6" fill="#c07a7c" stroke="#c89a40" stroke-width="0.700"/>
<circle cx="799.2" cy="385.7" r="6" fill="#c07a7c" stroke="#c89a40" stroke-width="0.700"/>
<circle cx="805.7" cy="401.5" r="6" fill="#c07a7c" stroke="#c89a40" stroke-width="0.700"/>
<circle cx="799.2" cy="417.3" r="6" fill="#c07a7c" stroke="#c89a40" stroke-width="0.700"/>
<circle cx="783.4" cy="423.8" r="6" fill="#c07a7c" stroke="#c89a40" stroke-width="0.700"/>
<circle cx="767.6" cy="417.3" r="6" fill="#c07a7c" stroke="#c89a40" stroke-width="0.700"/>
<circle cx="761.1" cy="401.5" r="6" fill="#c07a7c" stroke="#c89a40" stroke-width="0.700"/>
<circle cx="767.6" cy="385.7" r="6" fill="#c07a7c" stroke="#c89a40" stroke-width="0.700"/>
<circle cx="783.4" cy="401.5" r="17.000" fill="#120e50"/>
<circle cx="783.4" cy="379.2" r="3.300" fill="#120e50" stroke="#c8c820" stroke-width="0.700"/><circle cx="783.4" cy="379.2" r="4.500" fill="none" stroke="#8a7a40" stroke-width="0.500"/>
<circle cx="799.2" cy="385.7" r="3.300" fill="#120e50" stroke="#c8c820" stroke-width="0.700"/><circle cx="799.2" cy="385.7" r="4.500" fill="none" stroke="#8a7a40" stroke-width="0.500"/>
<circle cx="805.7" cy="401.5" r="3.300" fill="#120e50" stroke="#c8c820" stroke-width="0.700"/><circle cx="805.7" cy="401.5" r="4.500" fill="none" stroke="#8a7a40" stroke-width="0.500"/>
<circle cx="799.2" cy="417.3" r="3.300" fill="#120e50" stroke="#c8c820" stroke-width="0.700"/><circle cx="799.2" cy="417.3" r="4.500" fill="none" stroke="#8a7a40" stroke-width="0.500"/>
<circle cx="783.4" cy="423.8" r="3.300" fill="#120e50" stroke="#c8c820" stroke-width="0.700"/><circle cx="783.4" cy="423.8" r="4.500" fill="none" stroke="#8a7a40" stroke-width="0.500"/>
<circle cx="767.6" cy="417.3" r="3.300" fill="#120e50" stroke="#c8c820" stroke-width="0.700"/><circle cx="767.6" cy="417.3" r="4.500" fill="none" stroke="#8a7a40" stroke-width="0.500"/>
<circle cx="761.1" cy="401.5" r="3.300" fill="#120e50" stroke="#c8c820" stroke-width="0.700"/><circle cx="761.1" cy="401.5" r="4.500" fill="none" stroke="#8a7a40" stroke-width="0.500"/>
<circle cx="767.6" cy="385.7" r="3.300" fill="#120e50" stroke="#c8c820" stroke-width="0.700"/><circle cx="767.6" cy="385.7" r="4.500" fill="none" stroke="#8a7a40" stroke-width="0.500"/>
<path d="M814.300 318H820.300V346L831.200 360.300L814.700 406.300H814.300Z" fill="#ff5c6c" stroke="#d89030" stroke-width="0.8" stroke-linejoin="round" />
<path d="M700.300 394H732L772.400 432.900Q800 430 836 427.800Q900 423 960 422.300L988 422.800V516.800H705L700.300 510.300Z" fill="#00aa00" stroke="#c8c820" stroke-width="0.8" stroke-linejoin="round" />
<path d="M991 427h15.300v89.800h-15.300z" fill="#4666c4" stroke="#c8c820" stroke-width="0.8" stroke-linejoin="round" />
<circle cx="269.500" cy="520" r="2.300" fill="#a000a0"/>
</svg>
<div class="b" style="left:0px;top:560.7px;width:1024px;height:15.3px;background:#f0f0f0;"></div>
<div class="b" style="left:0px;top:574.6px;width:1024px;height:1.4px;background:#b9c9e0;"></div>
<span class="t" style="transform:translate(3.50px,565.40px) rotate(0.03deg);font-size:7.6px;line-height:9px;color:#505050;letter-spacing:0.000px;">1</span>
<span class="t" style="transform:translate(11.00px,565.40px) rotate(0.03deg);font-size:7.6px;line-height:9px;color:#505050;letter-spacing:-0.075px;">3000.000x1500.000</span>
<span class="t" style="transform:translate(86.00px,565.40px) rotate(0.03deg);font-size:7.6px;line-height:9px;color:#505050;letter-spacing:-0.137px;">Use : 86.8 %</span>
<span class="t" style="transform:translate(136.00px,565.40px) rotate(0.03deg);font-size:7.6px;line-height:9px;color:#505050;letter-spacing:-0.056px;">Remnant : 95.0 %</span>
<span class="t" style="transform:translate(205.00px,565.40px) rotate(0.03deg);font-size:7.6px;line-height:9px;color:#505050;letter-spacing:-0.044px;">2980.200x1495.000</span>
<span class="t" style="transform:translate(280.70px,565.40px) rotate(0.03deg) scaleX(0.922);font-size:7.6px;line-height:9px;color:#505050;letter-spacing:0.000px;">SHT01</span>
<span class="t" style="transform:translate(312.00px,565.40px) rotate(0.03deg) scaleX(0.944);font-size:7.6px;line-height:9px;color:#505050;letter-spacing:0.000px;">CNC: 00359</span>
<span class="t" style="transform:translate(862.50px,565.40px) rotate(0.03deg);font-size:7.6px;line-height:9px;color:#505050;letter-spacing:-0.119px;">X: 1807.558</span>
<span class="t" style="transform:translate(932.50px,565.40px) rotate(0.03deg);font-size:7.6px;line-height:9px;color:#505050;letter-spacing:-0.157px;">Y: 1600.007</span>
<span class="t" style="transform:translate(1004.50px,565.40px) rotate(0.03deg);font-size:7.6px;line-height:9px;color:#505050;letter-spacing:0.838px;">mm</span>
</div>
</body></html>
